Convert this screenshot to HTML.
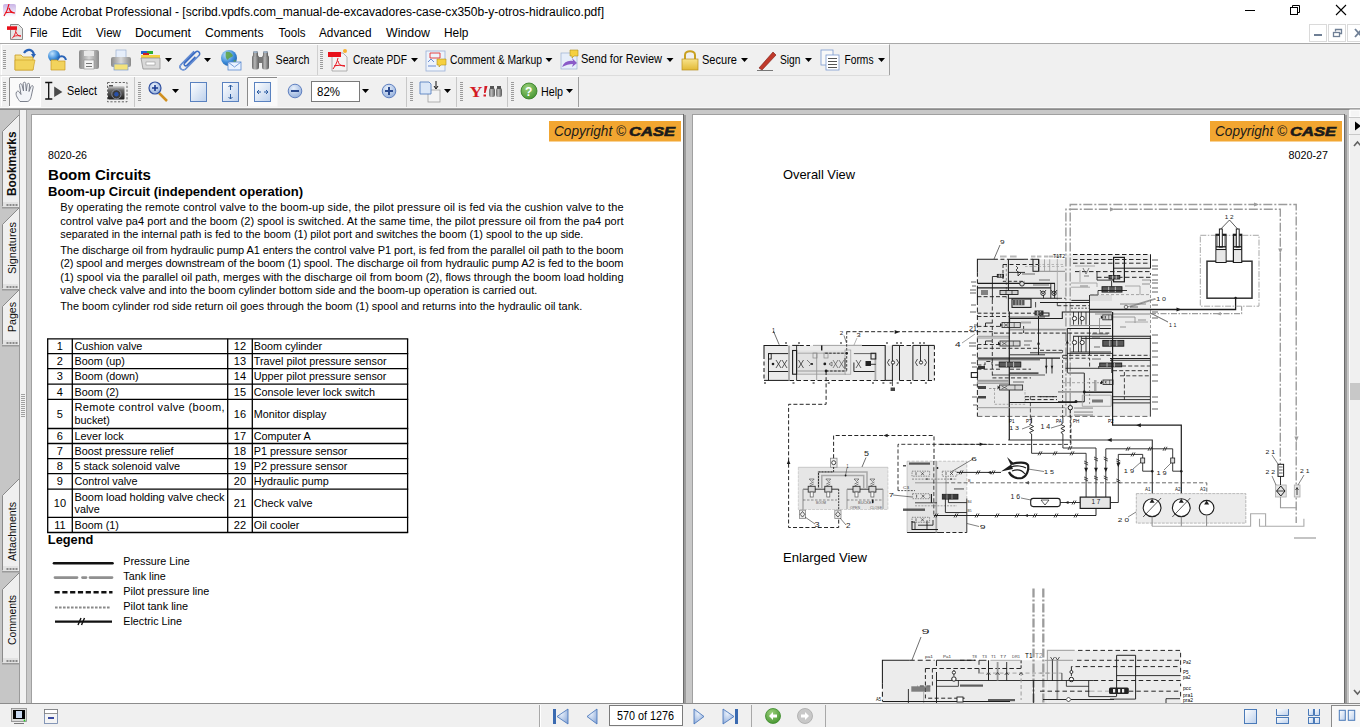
<!DOCTYPE html><html><head><meta charset="utf-8"><style>html,body{margin:0;padding:0;width:1360px;height:727px;overflow:hidden;background:#f0f0f0}svg{display:block;font-family:"Liberation Sans",sans-serif}</style></head><body><svg width="1360" height="727" viewBox="0 0 1360 727"><rect x="0" y="0" width="1360" height="727" fill="#f0f0f0"/><rect x="0" y="0" width="1360" height="43" fill="#ffffff"/><rect x="0" y="43" width="1360" height="1" fill="#a9a9a9"/><defs><linearGradient id="acg" x1="0" y1="0" x2="0" y2="1"><stop offset="0" stop-color="#c9b4e6"/><stop offset="1" stop-color="#ffffff"/></linearGradient><linearGradient id="fold" x1="0" y1="0" x2="0" y2="1"><stop offset="0" stop-color="#f8e38a"/><stop offset="1" stop-color="#e2b934"/></linearGradient><linearGradient id="btnb" x1="0" y1="0" x2="1" y2="1"><stop offset="0" stop-color="#ffffff"/><stop offset="1" stop-color="#bcd0ec"/></linearGradient><linearGradient id="gray" x1="0" y1="0" x2="1" y2="0"><stop offset="0" stop-color="#8a8a8a"/><stop offset="0.5" stop-color="#d8d8d8"/><stop offset="1" stop-color="#8a8a8a"/></linearGradient><radialGradient id="globe" cx="0.35" cy="0.3" r="0.8"><stop offset="0" stop-color="#bfe3ff"/><stop offset="0.6" stop-color="#3a8ad8"/><stop offset="1" stop-color="#1f5aa0"/></radialGradient><radialGradient id="grn" cx="0.4" cy="0.3" r="0.8"><stop offset="0" stop-color="#9ad07a"/><stop offset="1" stop-color="#3f8f2a"/></radialGradient><radialGradient id="bluec" cx="0.4" cy="0.3" r="0.8"><stop offset="0" stop-color="#e8f0fb"/><stop offset="1" stop-color="#8aa8d8"/></radialGradient></defs><rect x="3" y="4" width="13" height="13" fill="url(#acg)" rx="2"/><path d="M9,4 C8,9 6,13 4,16 M9,8 C10,11 12,13 15,13 M5,13 C8,12 11,12 14,13" fill="none" stroke="#e8101a" stroke-width="1.2"/><text x="23" y="16" font-size="12" fill="#000" textLength="581" lengthAdjust="spacingAndGlyphs">Adobe Acrobat Professional - [scribd.vpdfs.com_manual-de-excavadores-case-cx350b-y-otros-hidraulico.pdf]</text><rect x="1245" y="10" width="10" height="1" fill="#000"/><rect x="1290.5" y="7.5" width="7" height="7" fill="none" stroke="#000" stroke-width="1"/><path d="M1292.5,7.5 V5.5 H1299.5 V12.5 H1297.5" fill="none" stroke="#000" stroke-width="1"/><path d="M1336,5 L1346,15 M1346,5 L1336,15" fill="none" stroke="#000" stroke-width="1.1"/><path d="M10.5,24.5 H18.5 L22.5,28.5 V39.5 H10.5 Z" fill="#e6e6e6" stroke="#8a8a8a" stroke-width="1"/><rect x="7" y="26.3" width="10" height="3.6" fill="#e8101a"/><path d="M16,30 C15.5,34 14,36.5 12,38.5 M16,32 C17,35 18.5,36 21,36 M13.5,36.5 C16,35.5 18.5,35.5 21,36" fill="none" stroke="#e8101a" stroke-width="0.9"/><text x="30" y="37" font-size="12" fill="#000" textLength="17.5" lengthAdjust="spacingAndGlyphs">File</text><text x="62" y="37" font-size="12" fill="#000" textLength="19.5" lengthAdjust="spacingAndGlyphs">Edit</text><text x="96" y="37" font-size="12" fill="#000" textLength="25" lengthAdjust="spacingAndGlyphs">View</text><text x="135" y="37" font-size="12" fill="#000" textLength="56" lengthAdjust="spacingAndGlyphs">Document</text><text x="205" y="37" font-size="12" fill="#000" textLength="58.5" lengthAdjust="spacingAndGlyphs">Comments</text><text x="278.5" y="37" font-size="12" fill="#000" textLength="27" lengthAdjust="spacingAndGlyphs">Tools</text><text x="319" y="37" font-size="12" fill="#000" textLength="52.5" lengthAdjust="spacingAndGlyphs">Advanced</text><text x="386" y="37" font-size="12" fill="#000" textLength="44" lengthAdjust="spacingAndGlyphs">Window</text><text x="444" y="37" font-size="12" fill="#000" textLength="24.5" lengthAdjust="spacingAndGlyphs">Help</text><rect x="1309.5" y="24.5" width="17" height="17" fill="#ffffff" stroke="#dadada" stroke-width="1"/><rect x="1328.5" y="24.5" width="17" height="17" fill="#ffffff" stroke="#dadada" stroke-width="1"/><rect x="1347.5" y="24.5" width="17" height="17" fill="#ffffff" stroke="#dadada" stroke-width="1"/><rect x="1314" y="34" width="8" height="2" fill="#6f7f95"/><rect x="1333.5" y="32.5" width="6" height="4" fill="none" stroke="#6f7f95" stroke-width="1.3"/><path d="M1335.5,31.5 V29.5 H1341.5 V33.5 H1339.5" fill="none" stroke="#6f7f95" stroke-width="1.3"/><path d="M1355,29 L1362,37 M1362,29 L1355,37" fill="none" stroke="#6f7f95" stroke-width="1.8"/><rect x="0" y="44" width="1360" height="32" fill="#f0f0f0"/><path d="M1.5,75.5 V44.5 H889.5 V75.5" fill="none" stroke="#ffffff" stroke-width="1"/><path d="M889.5,44.5 V75.5 H0" fill="none" stroke="#a0a0a0" stroke-width="1"/><rect x="0" y="75" width="890" height="1" fill="#dcdcdc"/><rect x="3" y="50" width="3" height="1" fill="#9a9a9a"/><rect x="3" y="52" width="3" height="1" fill="#9a9a9a"/><rect x="3" y="54" width="3" height="1" fill="#9a9a9a"/><rect x="3" y="56" width="3" height="1" fill="#9a9a9a"/><rect x="3" y="58" width="3" height="1" fill="#9a9a9a"/><rect x="3" y="60" width="3" height="1" fill="#9a9a9a"/><rect x="3" y="62" width="3" height="1" fill="#9a9a9a"/><rect x="3" y="64" width="3" height="1" fill="#9a9a9a"/><rect x="3" y="66" width="3" height="1" fill="#9a9a9a"/><rect x="3" y="68" width="3" height="1" fill="#9a9a9a"/><path d="M15,55 H21 L23,57 H33 V70 H15 Z" fill="url(#fold)" stroke="#c89a20" stroke-width="0.8"/><path d="M15,60 H35 L33,70 H15 Z" fill="#f2d35c" stroke="#c89a20" stroke-width="0.6"/><path d="M24,53 C27,48 33,49 34,55" fill="none" stroke="#2a64b8" stroke-width="2.2"/><path d="M31,54 L36,54 L33.5,58 Z" fill="#2a64b8"/><circle cx="54" cy="56" r="6" fill="url(#globe)"/><path d="M51,60 H57 L58,61 H65 V70 H51 Z" fill="#f2d35c" stroke="#c89a20" stroke-width="0.7"/><path d="M58,58 C61,55 65,56 66,60" fill="none" stroke="#2a64b8" stroke-width="2"/><rect x="79" y="50" width="20" height="19" fill="url(#gray)" rx="2"/><rect x="84" y="51" width="10" height="5" fill="#e8e8e8"/><rect x="84" y="60" width="10" height="9" fill="#f4f4f4" stroke="#888" stroke-width="0.6"/><rect x="86" y="63" width="6" height="1" fill="#777"/><rect x="86" y="66" width="6" height="1" fill="#777"/><rect x="116" y="50" width="10" height="8" fill="#e6eefa" stroke="#9ab0d0" stroke-width="0.7"/><rect x="111" y="57" width="20" height="10" fill="url(#gray)" rx="2"/><rect x="114" y="64" width="14" height="6" fill="#f4e27a" stroke="#7a9ad0" stroke-width="0.7"/><rect x="141" y="51" width="6" height="3" fill="#2060d0"/><rect x="147" y="51" width="6" height="3" fill="#30b030"/><rect x="143" y="53" width="6" height="3" fill="#d02020"/><rect x="141" y="55" width="19" height="4" fill="#f6d040"/><path d="M141,58 H160 V69 H143 Z" fill="#d8d8d8" stroke="#888" stroke-width="0.7"/><rect x="146" y="62" width="9" height="3" fill="#ffffff" stroke="#888" stroke-width="0.5"/><path d="M165.0,58 L172.0,58 L168.5,62 Z" fill="#000"/><g transform="translate(190,60) rotate(-45)"><path d="M9,-3.2 H-9.5 A3.2,3.2 0 0 0 -9.5,3.2 H9.5 A2.4,2.4 0 0 0 9.5,-1.6 H-6 A1.6,1.6 0 0 0 -6,1.6 H6" fill="none" stroke="#3f6fc4" stroke-width="1.5"/><path d="M9,-3.2 H-9.5 A3.2,3.2 0 0 0 -9.5,3.2 H9.5" fill="none" stroke="#bcd2f2" stroke-width="0.5"/></g><path d="M204.0,58 L211.0,58 L207.5,62 Z" fill="#000"/><circle cx="229" cy="58" r="8" fill="url(#globe)"/><path d="M226,52 C229,51 232,53 233,56 C231,58 229,57 228,60 C226,59 225,56 226,52 Z M234,60 C236,60 237,62 236,64 L233,63 Z" fill="#5aa040" opacity="0.85"/><rect x="228" y="62" width="13" height="8" fill="#eaf2ff" stroke="#5a8ad0" stroke-width="0.8"/><path d="M228,62 L234.5,67 L241,62" fill="none" stroke="#5a8ad0" stroke-width="0.8"/><defs><linearGradient id="bino" x1="0" y1="0" x2="1" y2="0"><stop offset="0" stop-color="#6a6a6a"/><stop offset="0.4" stop-color="#b8b8b8"/><stop offset="1" stop-color="#5a5a5a"/></linearGradient></defs><rect x="252" y="55" width="7" height="14.5" fill="url(#bino)" rx="2.5"/><rect x="262" y="55" width="7" height="14.5" fill="url(#bino)" rx="2.5"/><rect x="253" y="51" width="5" height="6" fill="url(#bino)" rx="1.5"/><rect x="263" y="51" width="5" height="6" fill="url(#bino)" rx="1.5"/><rect x="253.5" y="51.5" width="4" height="1.2" fill="#9ab8d8"/><rect x="263.5" y="51.5" width="4" height="1.2" fill="#9ab8d8"/><rect x="258.5" y="57" width="4" height="6" fill="#777"/><text x="275.5" y="64" font-size="12" fill="#000" textLength="34" lengthAdjust="spacingAndGlyphs">Search</text><line x1="317.5" y1="45" x2="317.5" y2="75" stroke="#d0d0d0" stroke-width="1"/><rect x="320" y="50" width="3" height="1" fill="#9a9a9a"/><rect x="320" y="52" width="3" height="1" fill="#9a9a9a"/><rect x="320" y="54" width="3" height="1" fill="#9a9a9a"/><rect x="320" y="56" width="3" height="1" fill="#9a9a9a"/><rect x="320" y="58" width="3" height="1" fill="#9a9a9a"/><rect x="320" y="60" width="3" height="1" fill="#9a9a9a"/><rect x="320" y="62" width="3" height="1" fill="#9a9a9a"/><rect x="320" y="64" width="3" height="1" fill="#9a9a9a"/><rect x="320" y="66" width="3" height="1" fill="#9a9a9a"/><rect x="320" y="68" width="3" height="1" fill="#9a9a9a"/><path d="M330,53 H343 L347,57 V71 H332 V53" fill="#f4f4f4" stroke="#a0a0a0" stroke-width="0.8"/><rect x="328" y="52" width="13" height="5" fill="#e8101a"/><path d="M338,58 C337,63 335,66 333,69 M338,61 C339,65 341,66 345,66 M334,66 C338,65 342,65 345,66" fill="none" stroke="#e8101a" stroke-width="1"/><circle cx="345" cy="51" r="2" fill="#f8b030"/><text x="353" y="64" font-size="12" fill="#000" textLength="54" lengthAdjust="spacingAndGlyphs">Create PDF</text><path d="M411.0,58 L418.0,58 L414.5,62 Z" fill="#000"/><rect x="426" y="51" width="19" height="20" fill="#eef3fb" stroke="#9ab0d8" stroke-width="0.8"/><path d="M430,53 h10 v5 h-10 z" fill="none" stroke="#e03030" stroke-width="0.9"/><path d="M437,59 h9 v6 h-5 l-2,2 v-2 h-2 z" fill="#f6d040" stroke="#b09020" stroke-width="0.6"/><path d="M428,62 l3,-3 l3,3 M428,66 h8" fill="none" stroke="#3060c0" stroke-width="0.7"/><text x="450" y="64" font-size="12" fill="#000" textLength="92" lengthAdjust="spacingAndGlyphs">Comment &amp; Markup</text><path d="M545.5,58 L552.5,58 L549,62 Z" fill="#000"/><rect x="561" y="53" width="16" height="16" fill="#e6eefa" stroke="#9ab0d0" stroke-width="0.7"/><path d="M570,50 h8 v6 h-4 l-2,2 v-2 h-2 z" fill="#f6d040" stroke="#b09020" stroke-width="0.6"/><path d="M562,67 C564,62 568,60 573,61 L572,58 L577,63 L572,67 L573,64 C569,64 566,65 562,67" fill="#8a5ac8"/><text x="581" y="63" font-size="12" fill="#000" textLength="81" lengthAdjust="spacingAndGlyphs">Send for Review</text><path d="M666.5,58 L673.5,58 L670,62 Z" fill="#000"/><path d="M685,59 V55 C685,50 695,50 695,55 V59" fill="none" stroke="#c8a020" stroke-width="2"/><rect x="682" y="59" width="16" height="11" fill="url(#fold)" stroke="#b89020" stroke-width="0.7"/><text x="702" y="64" font-size="12" fill="#000" textLength="35" lengthAdjust="spacingAndGlyphs">Secure</text><path d="M741.0,58 L748.0,58 L744.5,62 Z" fill="#000"/><path d="M759,68 L773,52 L776,55 L762,70 Z" fill="#c0392b" stroke="#7a1a10" stroke-width="0.6"/><line x1="757" y1="70.5" x2="773" y2="70.5" stroke="#777" stroke-width="1"/><text x="780" y="64" font-size="12" fill="#000" textLength="20.5" lengthAdjust="spacingAndGlyphs">Sign</text><path d="M805.0,58 L812.0,58 L808.5,62 Z" fill="#000"/><rect x="821" y="50" width="12" height="15" fill="#f8f8f8" stroke="#7a9ad0" stroke-width="0.8"/><rect x="826" y="55" width="13" height="15" fill="#ffffff" stroke="#7a9ad0" stroke-width="0.8"/><rect x="828" y="58" width="9" height="1" fill="#555"/><rect x="828" y="61" width="9" height="1" fill="#555"/><rect x="828" y="64" width="9" height="1" fill="#555"/><rect x="828" y="67" width="9" height="1" fill="#555"/><text x="844.5" y="64" font-size="12" fill="#000" textLength="29" lengthAdjust="spacingAndGlyphs">Forms</text><path d="M878.0,58 L885.0,58 L881.5,62 Z" fill="#000"/><rect x="0" y="76" width="1360" height="31" fill="#f0f0f0"/><path d="M1.5,106.5 V76.5 H578.5 V106.5" fill="none" stroke="#ffffff" stroke-width="1"/><line x1="578.5" y1="77" x2="578.5" y2="107" stroke="#a0a0a0" stroke-width="1"/><rect x="3" y="82" width="3" height="1" fill="#9a9a9a"/><rect x="3" y="84" width="3" height="1" fill="#9a9a9a"/><rect x="3" y="86" width="3" height="1" fill="#9a9a9a"/><rect x="3" y="88" width="3" height="1" fill="#9a9a9a"/><rect x="3" y="90" width="3" height="1" fill="#9a9a9a"/><rect x="3" y="92" width="3" height="1" fill="#9a9a9a"/><rect x="3" y="94" width="3" height="1" fill="#9a9a9a"/><rect x="3" y="96" width="3" height="1" fill="#9a9a9a"/><rect x="3" y="98" width="3" height="1" fill="#9a9a9a"/><rect x="3" y="100" width="3" height="1" fill="#9a9a9a"/><rect x="9.5" y="77.5" width="31" height="29" fill="#fafafa" stroke="#ffffff" stroke-width="1"/><line x1="9.5" y1="78" x2="9.5" y2="106" stroke="#8a8a8a" stroke-width="1"/><line x1="9.5" y1="77.5" x2="40" y2="77.5" stroke="#8a8a8a" stroke-width="1"/><path d="M20,101.5 C18,99 15,95 16.5,92 C17.5,90.5 19,91 20,93 L21,94.5 L19.5,85.5 C19.2,83.5 21.5,83 22,85 L23.5,91 L23.2,83.5 C23.2,81.8 25.6,81.8 25.7,83.5 L26.3,91 L27.2,84.5 C27.5,82.8 29.8,83 29.6,84.8 L29,91.5 L31,86.5 C31.6,85 33.6,85.6 33.2,87.3 L31.5,95 C30.8,99 29.5,101.5 27,101.5 Z" fill="#f2f4f8" stroke="#6f7480" stroke-width="0.9"/><path d="M45.2,82.5 H52.3 M48.7,82.5 V99 M45.2,99 H52.3" fill="none" stroke="#111" stroke-width="1.3"/><path d="M54.2,86.5 L62.4,92 L54.2,97 Z" fill="#4a4a4a"/><text x="67" y="95" font-size="12" fill="#000" textLength="30" lengthAdjust="spacingAndGlyphs">Select</text><rect x="107.5" y="82.5" width="19.5" height="19.3" fill="none" stroke="#555" stroke-width="0.9" stroke-dasharray="2.2,1.6"/><defs><linearGradient id="cam" x1="0" y1="0" x2="0" y2="1"><stop offset="0" stop-color="#d8d8d8"/><stop offset="0.3" stop-color="#6a6a6a"/><stop offset="1" stop-color="#1e1e1e"/></linearGradient></defs><rect x="108" y="86" width="16.5" height="13.4" fill="url(#cam)" rx="1"/><rect x="109" y="85" width="4" height="1.5" fill="#555"/><circle cx="116.4" cy="94.3" r="4.6" fill="#3a3a3a" stroke="#9aa0b0" stroke-width="0.8"/><circle cx="116.4" cy="94.3" r="2.2" fill="#2850a8"/><line x1="134.5" y1="77" x2="134.5" y2="107" stroke="#c8c8c8" stroke-width="1"/><rect x="138" y="82" width="3" height="1" fill="#9a9a9a"/><rect x="138" y="84" width="3" height="1" fill="#9a9a9a"/><rect x="138" y="86" width="3" height="1" fill="#9a9a9a"/><rect x="138" y="88" width="3" height="1" fill="#9a9a9a"/><rect x="138" y="90" width="3" height="1" fill="#9a9a9a"/><rect x="138" y="92" width="3" height="1" fill="#9a9a9a"/><rect x="138" y="94" width="3" height="1" fill="#9a9a9a"/><rect x="138" y="96" width="3" height="1" fill="#9a9a9a"/><rect x="138" y="98" width="3" height="1" fill="#9a9a9a"/><rect x="138" y="100" width="3" height="1" fill="#9a9a9a"/><line x1="159" y1="93" x2="167" y2="101" stroke="#d09020" stroke-width="2.5"/><circle cx="155" cy="88" r="6" fill="url(#bluec)" stroke="#3050a0" stroke-width="1.2"/><path d="M155,85 V91 M152,88 H158" fill="none" stroke="#1a3a90" stroke-width="1.6"/><path d="M172.0,89 L179.0,89 L175.5,93 Z" fill="#000"/><rect x="190.5" y="82.5" width="16" height="19" fill="url(#btnb)" stroke="#5a82c0" stroke-width="1"/><rect x="222.5" y="82.5" width="16" height="19" fill="url(#btnb)" stroke="#5a82c0" stroke-width="1"/><path d="M230.5,85 V90 M228.5,87 L230.5,85 L232.5,87 M230.5,94 V99 M228.5,97 L230.5,99 L232.5,97" fill="none" stroke="#2a5aa0" stroke-width="1"/><rect x="247.5" y="77.5" width="30" height="29" fill="#fafafa"/><line x1="247.5" y1="78" x2="247.5" y2="106" stroke="#8a8a8a" stroke-width="1"/><line x1="247.5" y1="77.5" x2="277" y2="77.5" stroke="#8a8a8a" stroke-width="1"/><rect x="254.5" y="82.5" width="16" height="19" fill="url(#btnb)" stroke="#5a82c0" stroke-width="1"/><path d="M257,92 H261 M259,90 L257,92 L259,94 M264,92 H268 M266,90 L268,92 L266,94" fill="none" stroke="#2a5aa0" stroke-width="1"/><circle cx="295" cy="91" r="6.8" fill="url(#bluec)" stroke="#6080c0" stroke-width="1"/><rect x="291" y="90" width="8" height="2" fill="#2a4a90"/><rect x="311.5" y="81.5" width="48" height="20" fill="#ffffff" stroke="#7a7a7a" stroke-width="1"/><text x="317" y="96" font-size="12" fill="#000" textLength="23" lengthAdjust="spacingAndGlyphs">82%</text><path d="M362.0,89 L369.0,89 L365.5,93 Z" fill="#000"/><circle cx="389" cy="91" r="6.8" fill="url(#bluec)" stroke="#6080c0" stroke-width="1"/><rect x="385" y="90" width="8" height="2" fill="#2a4a90"/><rect x="388" y="87" width="2" height="8" fill="#2a4a90"/><line x1="406.5" y1="77" x2="406.5" y2="107" stroke="#c8c8c8" stroke-width="1"/><rect x="410" y="82" width="3" height="1" fill="#9a9a9a"/><rect x="410" y="84" width="3" height="1" fill="#9a9a9a"/><rect x="410" y="86" width="3" height="1" fill="#9a9a9a"/><rect x="410" y="88" width="3" height="1" fill="#9a9a9a"/><rect x="410" y="90" width="3" height="1" fill="#9a9a9a"/><rect x="410" y="92" width="3" height="1" fill="#9a9a9a"/><rect x="410" y="94" width="3" height="1" fill="#9a9a9a"/><rect x="410" y="96" width="3" height="1" fill="#9a9a9a"/><rect x="410" y="98" width="3" height="1" fill="#9a9a9a"/><rect x="410" y="100" width="3" height="1" fill="#9a9a9a"/><rect x="428" y="90" width="12" height="12" fill="#f4f4f4" stroke="#a0a0a0" stroke-width="0.8"/><path d="M420,82 H429 L431,84 V94 H420 Z" fill="#dbe7f7" stroke="#5a82c0" stroke-width="0.9"/><path d="M436,81 V88 M434,86 L436,89 L438,86" fill="none" stroke="#111" stroke-width="1"/><path d="M444.0,89 L451.0,89 L447.5,93 Z" fill="#000"/><line x1="456.5" y1="77" x2="456.5" y2="107" stroke="#c8c8c8" stroke-width="1"/><rect x="460" y="82" width="3" height="1" fill="#9a9a9a"/><rect x="460" y="84" width="3" height="1" fill="#9a9a9a"/><rect x="460" y="86" width="3" height="1" fill="#9a9a9a"/><rect x="460" y="88" width="3" height="1" fill="#9a9a9a"/><rect x="460" y="90" width="3" height="1" fill="#9a9a9a"/><rect x="460" y="92" width="3" height="1" fill="#9a9a9a"/><rect x="460" y="94" width="3" height="1" fill="#9a9a9a"/><rect x="460" y="96" width="3" height="1" fill="#9a9a9a"/><rect x="460" y="98" width="3" height="1" fill="#9a9a9a"/><rect x="460" y="100" width="3" height="1" fill="#9a9a9a"/><text x="469.5" y="96.5" font-size="14" font-weight="bold" fill="#d41a24" font-family="Liberation Serif, serif" textLength="13" lengthAdjust="spacingAndGlyphs">Y</text><path d="M484.5,86 L487.5,86 L485.5,93 L484,93 Z M483.5,94.5 h2.5 v2 h-2.5 z" fill="#d41a24"/><rect x="489" y="88" width="6" height="9" fill="url(#bino)" rx="2"/><rect x="496" y="88" width="6" height="9" fill="url(#bino)" rx="2"/><rect x="490" y="86" width="4" height="3" fill="#555"/><rect x="497" y="86" width="4" height="3" fill="#555"/><line x1="507.5" y1="77" x2="507.5" y2="107" stroke="#c8c8c8" stroke-width="1"/><rect x="511" y="82" width="3" height="1" fill="#9a9a9a"/><rect x="511" y="84" width="3" height="1" fill="#9a9a9a"/><rect x="511" y="86" width="3" height="1" fill="#9a9a9a"/><rect x="511" y="88" width="3" height="1" fill="#9a9a9a"/><rect x="511" y="90" width="3" height="1" fill="#9a9a9a"/><rect x="511" y="92" width="3" height="1" fill="#9a9a9a"/><rect x="511" y="94" width="3" height="1" fill="#9a9a9a"/><rect x="511" y="96" width="3" height="1" fill="#9a9a9a"/><rect x="511" y="98" width="3" height="1" fill="#9a9a9a"/><rect x="511" y="100" width="3" height="1" fill="#9a9a9a"/><circle cx="529" cy="91" r="8" fill="url(#grn)" stroke="#2f7a20" stroke-width="0.8"/><text x="525" y="96" font-size="12" font-weight="bold" fill="#ffffff">?</text><text x="541" y="96" font-size="12" fill="#000" textLength="22" lengthAdjust="spacingAndGlyphs">Help</text><path d="M566.0,89 L573.0,89 L569.5,93 Z" fill="#000"/><rect x="0" y="107" width="1360" height="1" fill="#f8f8f8"/><rect x="0" y="108" width="1360" height="1" fill="#a4a4a4"/><rect x="0" y="109" width="1360" height="1" fill="#8a8a8a"/><rect x="0" y="110" width="1360" height="593" fill="#c8c8c8"/><rect x="0" y="110" width="19" height="593" fill="#c6c6c6"/><rect x="19" y="110" width="1" height="593" fill="#9a9a9a"/><rect x="20" y="110" width="6" height="593" fill="#f2f2f2"/><rect x="26" y="110" width="1" height="593" fill="#a8a8a8"/><rect x="21" y="394" width="4" height="1" fill="#a0a0a0"/><rect x="21" y="396" width="4" height="1" fill="#a0a0a0"/><rect x="21" y="398" width="4" height="1" fill="#a0a0a0"/><rect x="21" y="400" width="4" height="1" fill="#a0a0a0"/><rect x="21" y="402" width="4" height="1" fill="#a0a0a0"/><rect x="21" y="404" width="4" height="1" fill="#a0a0a0"/><rect x="21" y="406" width="4" height="1" fill="#a0a0a0"/><rect x="21" y="408" width="4" height="1" fill="#a0a0a0"/><rect x="21" y="410" width="4" height="1" fill="#a0a0a0"/><rect x="21" y="412" width="4" height="1" fill="#a0a0a0"/><rect x="21" y="414" width="4" height="1" fill="#a0a0a0"/><rect x="21" y="416" width="4" height="1" fill="#a0a0a0"/><path d="M19,115 L3,131 V207 H19 Z" fill="#efefef"/><path d="M19,115 L2.5,131.5 V206" fill="none" stroke="#8a8a8a" stroke-width="1"/><rect x="3" y="202" width="15" height="5" fill="#e2e2e2"/><rect x="2" y="207" width="17" height="1.5" fill="#9a9a9a"/><rect x="6.5" y="204" width="2" height="2" fill="#8a8a8a"/><rect x="9.5" y="204" width="2" height="2" fill="#8a8a8a"/><rect x="12.5" y="204" width="2" height="2" fill="#8a8a8a"/><rect x="15.5" y="204" width="2" height="2" fill="#8a8a8a"/><g transform="translate(15.5,196) rotate(-90)"><text x="0" y="0" font-size="12" font-weight="bold" fill="#101010" textLength="64.5" lengthAdjust="spacingAndGlyphs">Bookmarks</text></g><path d="M19,208 L3,224 V289 H19 Z" fill="#efefef"/><path d="M19,208 L2.5,224.5 V288" fill="none" stroke="#8a8a8a" stroke-width="1"/><rect x="3" y="284" width="15" height="5" fill="#e2e2e2"/><rect x="2" y="289" width="17" height="1.5" fill="#9a9a9a"/><rect x="6.5" y="286" width="2" height="2" fill="#8a8a8a"/><rect x="9.5" y="286" width="2" height="2" fill="#8a8a8a"/><rect x="12.5" y="286" width="2" height="2" fill="#8a8a8a"/><rect x="15.5" y="286" width="2" height="2" fill="#8a8a8a"/><g transform="translate(15.5,274) rotate(-90)"><text x="0" y="0" font-size="11" fill="#101010" textLength="52" lengthAdjust="spacingAndGlyphs">Signatures</text></g><path d="M19,290 L3,306 V345 H19 Z" fill="#efefef"/><path d="M19,290 L2.5,306.5 V344" fill="none" stroke="#8a8a8a" stroke-width="1"/><rect x="3" y="340" width="15" height="5" fill="#e2e2e2"/><rect x="2" y="345" width="17" height="1.5" fill="#9a9a9a"/><rect x="6.5" y="342" width="2" height="2" fill="#8a8a8a"/><rect x="9.5" y="342" width="2" height="2" fill="#8a8a8a"/><rect x="12.5" y="342" width="2" height="2" fill="#8a8a8a"/><rect x="15.5" y="342" width="2" height="2" fill="#8a8a8a"/><g transform="translate(15.5,332) rotate(-90)"><text x="0" y="0" font-size="11" fill="#101010" textLength="30" lengthAdjust="spacingAndGlyphs">Pages</text></g><path d="M19,479 L3,495 V571 H19 Z" fill="#efefef"/><path d="M19,479 L2.5,495.5 V570" fill="none" stroke="#8a8a8a" stroke-width="1"/><rect x="3" y="566" width="15" height="5" fill="#e2e2e2"/><rect x="2" y="571" width="17" height="1.5" fill="#9a9a9a"/><rect x="6.5" y="568" width="2" height="2" fill="#8a8a8a"/><rect x="9.5" y="568" width="2" height="2" fill="#8a8a8a"/><rect x="12.5" y="568" width="2" height="2" fill="#8a8a8a"/><rect x="15.5" y="568" width="2" height="2" fill="#8a8a8a"/><g transform="translate(15.5,561) rotate(-90)"><text x="0" y="0" font-size="11" fill="#101010" textLength="59" lengthAdjust="spacingAndGlyphs">Attachments</text></g><path d="M19,573 L3,589 V663 H19 Z" fill="#efefef"/><path d="M19,573 L2.5,589.5 V662" fill="none" stroke="#8a8a8a" stroke-width="1"/><rect x="3" y="658" width="15" height="5" fill="#e2e2e2"/><rect x="2" y="663" width="17" height="1.5" fill="#9a9a9a"/><rect x="6.5" y="660" width="2" height="2" fill="#8a8a8a"/><rect x="9.5" y="660" width="2" height="2" fill="#8a8a8a"/><rect x="12.5" y="660" width="2" height="2" fill="#8a8a8a"/><rect x="15.5" y="660" width="2" height="2" fill="#8a8a8a"/><g transform="translate(15.5,645) rotate(-90)"><text x="0" y="0" font-size="11" fill="#101010" textLength="50" lengthAdjust="spacingAndGlyphs">Comments</text></g><rect x="31" y="114" width="653" height="600" fill="#ffffff"/><rect x="31" y="114" width="652" height="1" fill="#a0a0a0"/><rect x="31" y="114" width="1" height="590" fill="#a0a0a0"/><rect x="683" y="114" width="1" height="590" fill="#6a6a6a"/><rect x="684" y="115" width="2" height="589" fill="#9c9c9c"/><rect x="692" y="114" width="653" height="600" fill="#ffffff"/><rect x="692" y="114" width="652" height="1" fill="#a0a0a0"/><rect x="692" y="114" width="1" height="590" fill="#a0a0a0"/><rect x="1344" y="114" width="1" height="590" fill="#6a6a6a"/><rect x="1345" y="115" width="2" height="589" fill="#9c9c9c"/><rect x="1349" y="110" width="11" height="593" fill="#f0f0f0"/><rect x="1349" y="110" width="1" height="593" fill="#ffffff"/><rect x="1350" y="110" width="10" height="7" fill="#f4f4f4" stroke="#ffffff" stroke-width="1"/><rect x="1349" y="117" width="11" height="1" fill="#c8c8c8"/><rect x="1350" y="118" width="10" height="14" fill="#f0f0f0"/><rect x="1349" y="134" width="11" height="1" fill="#c8c8c8"/><path d="M1355,121.5 L1361,126 L1355,130.6 Z" fill="#000"/><path d="M1354,146 L1357.5,142 L1361,146" fill="none" stroke="#606060" stroke-width="1.6"/><rect x="1350" y="383" width="10" height="17" fill="#c8c8c8"/><path d="M1354,690 L1357.5,694 L1361,690" fill="none" stroke="#606060" stroke-width="1.6"/><rect x="0" y="703" width="1360" height="1" fill="#8c8c8c"/><rect x="0" y="704" width="1360" height="23" fill="#f0f0f0"/><rect x="11.5" y="708.5" width="15" height="13" fill="#d8d8d8" stroke="#888" stroke-width="0.8"/><rect x="13" y="710" width="12" height="9" fill="#000"/><rect x="16" y="711" width="6" height="7" fill="#c8d8f0"/><circle cx="24.5" cy="720.5" r="0.9" fill="#20d020"/><rect x="14" y="723" width="10" height="1" fill="#777"/><rect x="44.5" y="709.5" width="13" height="14" fill="#f4f4f4" stroke="#6a80a8" stroke-width="0.8"/><rect x="44.5" y="709.5" width="13" height="4" fill="#ffffff" stroke="#7a7a7a" stroke-width="0.8"/><rect x="48" y="717" width="6" height="2" fill="#3a4aa0"/><line x1="539.5" y1="705" x2="539.5" y2="727" stroke="#a8a8a8" stroke-width="1"/><line x1="540.5" y1="705" x2="540.5" y2="727" stroke="#ffffff" stroke-width="1"/><rect x="553" y="709" width="3" height="15" fill="#3a6ab0"/><path d="M568,709 L557,716.5 L568,724 Z" fill="url(#bluec)" stroke="#4070b8" stroke-width="0.8"/><path d="M597,709 L587,716.5 L597,724 Z" fill="url(#bluec)" stroke="#4070b8" stroke-width="0.8"/><rect x="609.5" y="705.5" width="73" height="20" fill="#ffffff" stroke="#7a7a7a" stroke-width="1"/><text x="617" y="720" font-size="12" fill="#000" textLength="57" lengthAdjust="spacingAndGlyphs">570 of 1276</text><path d="M694,709 L704,716.5 L694,724 Z" fill="url(#bluec)" stroke="#4070b8" stroke-width="0.8"/><path d="M723,709 L734,716.5 L723,724 Z" fill="url(#bluec)" stroke="#4070b8" stroke-width="0.8"/><rect x="735" y="709" width="3" height="15" fill="#3a6ab0"/><line x1="751.5" y1="705" x2="751.5" y2="727" stroke="#a8a8a8" stroke-width="1"/><circle cx="773" cy="716" r="7.5" fill="url(#grn)" stroke="#3a8a2a" stroke-width="0.8"/><path d="M769,716 L773,712 V714.5 H777 V717.5 H773 V720 Z" fill="#ffffff"/><circle cx="805" cy="716" r="7.5" fill="#c8c8c8" stroke="#a8a8a8" stroke-width="0.8"/><path d="M809,716 L805,712 V714.5 H801 V717.5 H805 V720 Z" fill="#ffffff"/><line x1="825.5" y1="705" x2="825.5" y2="727" stroke="#a8a8a8" stroke-width="1"/><rect x="1244.5" y="709.5" width="12" height="14" fill="url(#btnb)" stroke="#4a7ab8" stroke-width="1"/><rect x="1276.5" y="709" width="12" height="6.5" fill="url(#btnb)"/><path d="M1276.5,709 V715.5 H1288.5 V709" fill="none" stroke="#4a7ab8" stroke-width="1"/><rect x="1276.5" y="717.5" width="12" height="6" fill="url(#btnb)" stroke="#4a7ab8" stroke-width="1"/><rect x="1308.5" y="709" width="5" height="6.5" fill="url(#btnb)"/><path d="M1308.5,709 V715.5 H1313.5 V709" fill="none" stroke="#4a7ab8" stroke-width="1"/><rect x="1308.5" y="717.5" width="5" height="6" fill="url(#btnb)" stroke="#4a7ab8" stroke-width="1"/><rect x="1314.5" y="709" width="5" height="6.5" fill="url(#btnb)"/><path d="M1314.5,709 V715.5 H1319.5 V709" fill="none" stroke="#4a7ab8" stroke-width="1"/><rect x="1314.5" y="717.5" width="5" height="6" fill="url(#btnb)" stroke="#4a7ab8" stroke-width="1"/><rect x="1331.5" y="705.5" width="30" height="22" fill="#f8f8f8"/><line x1="1331.5" y1="705" x2="1331.5" y2="727" stroke="#8a8a8a" stroke-width="1"/><line x1="1331.5" y1="705.5" x2="1360" y2="705.5" stroke="#8a8a8a" stroke-width="1"/><rect x="1339.3" y="710.3" width="6" height="10" fill="url(#btnb)" stroke="#4a7ab8" stroke-width="1"/><rect x="1348.3" y="710.3" width="6.4" height="10" fill="url(#btnb)" stroke="#4a7ab8" stroke-width="1"/><rect x="549" y="121" width="132" height="20.5" fill="#f2a631"/><text x="554" y="136" font-size="14" font-style="italic" fill="#1a1a1a" textLength="72" lengthAdjust="spacingAndGlyphs">Copyright ©</text><text x="629" y="136" font-size="13.5" font-weight="bold" font-style="italic" fill="#1a1a1a" textLength="46" lengthAdjust="spacingAndGlyphs" stroke="#1a1a1a" stroke-width="0.6">CASE</text><rect x="1210" y="121" width="132" height="20.5" fill="#f2a631"/><text x="1215" y="136" font-size="14" font-style="italic" fill="#1a1a1a" textLength="72" lengthAdjust="spacingAndGlyphs">Copyright ©</text><text x="1290" y="136" font-size="13.5" font-weight="bold" font-style="italic" fill="#1a1a1a" textLength="46" lengthAdjust="spacingAndGlyphs" stroke="#1a1a1a" stroke-width="0.6">CASE</text><text x="48" y="159" font-size="11" fill="#000" textLength="39" lengthAdjust="spacingAndGlyphs">8020-26</text><text x="48" y="179.7" font-size="15" font-weight="bold" fill="#000" textLength="103" lengthAdjust="spacingAndGlyphs">Boom Circuits</text><text x="48" y="196" font-size="13" font-weight="bold" fill="#000" textLength="255" lengthAdjust="spacingAndGlyphs">Boom-up Circuit (independent operation)</text><text x="60.2" y="211.2" font-size="11" textLength="563.3" lengthAdjust="spacing">By operating the remote control valve to the boom-up side, the pilot pressure oil is fed via the cushion valve to the</text><text x="60.2" y="224.5" font-size="11" textLength="563.3" lengthAdjust="spacing">control valve pa4 port and the boom (2) spool is switched. At the same time, the pilot pressure oil from the pa4 port</text><text x="60.2" y="237.8" font-size="11" fill="#000" textLength="523.2" lengthAdjust="spacingAndGlyphs">separated in the internal path is fed to the boom (1) pilot port and switches the boom (1) spool to the up side.</text><text x="60.2" y="254.0" font-size="11" textLength="563.3" lengthAdjust="spacing">The discharge oil from hydraulic pump A1 enters the control valve P1 port, is fed from the parallel oil path to the boom</text><text x="60.2" y="267.3" font-size="11" textLength="563.3" lengthAdjust="spacing">(2) spool and merges downstream of the boom (1) spool. The discharge oil from hydraulic pump A2 is fed to the boom</text><text x="60.2" y="280.5" font-size="11" textLength="563.3" lengthAdjust="spacing">(1) spool via the parallel oil path, merges with the discharge oil from boom (2), flows through the boom load holding</text><text x="60.2" y="293.7" font-size="11" fill="#000" textLength="477" lengthAdjust="spacingAndGlyphs">valve check valve and into the boom cylinder bottom side and the boom-up operation is carried out.</text><text x="60.2" y="309.7" font-size="11" fill="#000" textLength="522" lengthAdjust="spacingAndGlyphs">The boom cylinder rod side return oil goes through the boom (1) spool and returns into the hydraulic oil tank.</text><line x1="47.1" y1="338.8" x2="408.20000000000005" y2="338.8" stroke="#000" stroke-width="1.3"/><line x1="47.1" y1="353.6" x2="408.20000000000005" y2="353.6" stroke="#000" stroke-width="1.3"/><line x1="47.1" y1="368.6" x2="408.20000000000005" y2="368.6" stroke="#000" stroke-width="1.3"/><line x1="47.1" y1="384.1" x2="408.20000000000005" y2="384.1" stroke="#000" stroke-width="1.3"/><line x1="47.1" y1="399.3" x2="408.20000000000005" y2="399.3" stroke="#000" stroke-width="1.3"/><line x1="47.1" y1="428.5" x2="408.20000000000005" y2="428.5" stroke="#000" stroke-width="1.3"/><line x1="47.1" y1="443.5" x2="408.20000000000005" y2="443.5" stroke="#000" stroke-width="1.3"/><line x1="47.1" y1="458.6" x2="408.20000000000005" y2="458.6" stroke="#000" stroke-width="1.3"/><line x1="47.1" y1="473.7" x2="408.20000000000005" y2="473.7" stroke="#000" stroke-width="1.3"/><line x1="47.1" y1="489.1" x2="408.20000000000005" y2="489.1" stroke="#000" stroke-width="1.3"/><line x1="47.1" y1="517.3" x2="408.20000000000005" y2="517.3" stroke="#000" stroke-width="1.3"/><line x1="47.1" y1="532.5" x2="408.20000000000005" y2="532.5" stroke="#000" stroke-width="1.3"/><line x1="47.7" y1="338.8" x2="47.7" y2="532.5" stroke="#000" stroke-width="1.3"/><line x1="72.3" y1="338.8" x2="72.3" y2="532.5" stroke="#000" stroke-width="1.3"/><line x1="227.7" y1="338.8" x2="227.7" y2="532.5" stroke="#000" stroke-width="1.3"/><line x1="252.3" y1="338.8" x2="252.3" y2="532.5" stroke="#000" stroke-width="1.3"/><line x1="407.6" y1="338.8" x2="407.6" y2="532.5" stroke="#000" stroke-width="1.3"/><text x="59.9" y="350.00000000000006" font-size="11" text-anchor="middle" fill="#000">1</text><text x="239.9" y="350.00000000000006" font-size="11" text-anchor="middle" fill="#000">12</text><text x="74.5" y="350.00000000000006" font-size="10.8" fill="#000">Cushion valve</text><text x="253.8" y="350.00000000000006" font-size="10.8" fill="#000">Boom cylinder</text><text x="59.9" y="364.90000000000003" font-size="11" text-anchor="middle" fill="#000">2</text><text x="239.9" y="364.90000000000003" font-size="11" text-anchor="middle" fill="#000">13</text><text x="74.5" y="364.90000000000003" font-size="10.8" fill="#000">Boom (up)</text><text x="253.8" y="364.90000000000003" font-size="10.8" fill="#000">Travel pilot pressure sensor</text><text x="59.9" y="380.15000000000003" font-size="11" text-anchor="middle" fill="#000">3</text><text x="239.9" y="380.15000000000003" font-size="11" text-anchor="middle" fill="#000">14</text><text x="74.5" y="380.15000000000003" font-size="10.8" fill="#000">Boom (down)</text><text x="253.8" y="380.15000000000003" font-size="10.8" fill="#000">Upper pilot pressure sensor</text><text x="59.9" y="395.50000000000006" font-size="11" text-anchor="middle" fill="#000">4</text><text x="239.9" y="395.50000000000006" font-size="11" text-anchor="middle" fill="#000">15</text><text x="74.5" y="395.50000000000006" font-size="10.8" fill="#000">Boom (2)</text><text x="253.8" y="395.50000000000006" font-size="10.8" fill="#000">Console lever lock switch</text><text x="59.9" y="417.7" font-size="11" text-anchor="middle" fill="#000">5</text><text x="239.9" y="417.7" font-size="11" text-anchor="middle" fill="#000">16</text><text x="74.5" y="410.8" font-size="11" textLength="150" lengthAdjust="spacing">Remote control valve (boom,</text><text x="74.5" y="423.5" font-size="10.8" fill="#000">bucket)</text><text x="253.8" y="417.7" font-size="10.8" fill="#000">Monitor display</text><text x="59.9" y="439.8" font-size="11" text-anchor="middle" fill="#000">6</text><text x="239.9" y="439.8" font-size="11" text-anchor="middle" fill="#000">17</text><text x="74.5" y="439.8" font-size="10.8" fill="#000">Lever lock</text><text x="253.8" y="439.8" font-size="10.8" fill="#000">Computer A</text><text x="59.9" y="454.85" font-size="11" text-anchor="middle" fill="#000">7</text><text x="239.9" y="454.85" font-size="11" text-anchor="middle" fill="#000">18</text><text x="74.5" y="454.85" font-size="10.8" fill="#000">Boost pressure relief</text><text x="253.8" y="454.85" font-size="10.8" fill="#000">P1 pressure sensor</text><text x="59.9" y="469.95" font-size="11" text-anchor="middle" fill="#000">8</text><text x="239.9" y="469.95" font-size="11" text-anchor="middle" fill="#000">19</text><text x="74.5" y="469.95" font-size="10.8" fill="#000">5 stack solenoid valve</text><text x="253.8" y="469.95" font-size="10.8" fill="#000">P2 pressure sensor</text><text x="59.9" y="485.2" font-size="11" text-anchor="middle" fill="#000">9</text><text x="239.9" y="485.2" font-size="11" text-anchor="middle" fill="#000">20</text><text x="74.5" y="485.2" font-size="10.8" fill="#000">Control valve</text><text x="253.8" y="485.2" font-size="10.8" fill="#000">Hydraulic pump</text><text x="59.9" y="507.0" font-size="11" text-anchor="middle" fill="#000">10</text><text x="239.9" y="507.0" font-size="11" text-anchor="middle" fill="#000">21</text><text x="74.5" y="500.6" font-size="11" textLength="150" lengthAdjust="spacing">Boom load holding valve check</text><text x="74.5" y="513.3000000000001" font-size="10.8" fill="#000">valve</text><text x="253.8" y="507.0" font-size="10.8" fill="#000">Check valve</text><text x="59.9" y="528.6999999999999" font-size="11" text-anchor="middle" fill="#000">11</text><text x="239.9" y="528.6999999999999" font-size="11" text-anchor="middle" fill="#000">22</text><text x="74.5" y="528.6999999999999" font-size="10.8" fill="#000">Boom (1)</text><text x="253.8" y="528.6999999999999" font-size="10.8" fill="#000">Oil cooler</text><text x="47.8" y="544" font-size="13" font-weight="bold" fill="#000" textLength="45.6" lengthAdjust="spacingAndGlyphs">Legend</text><line x1="54" y1="563.3" x2="112.5" y2="563.3" stroke="#111" stroke-width="2.6" stroke-linecap="round"/><path d="M55,577.6 H77 M82.5,577.6 H86 M90,577.6 H112" fill="none" stroke="#909090" stroke-width="2.8" stroke-linecap="round"/><line x1="54.5" y1="592.2" x2="112.5" y2="592.2" stroke="#111" stroke-width="2.6" stroke-dasharray="5.2,2.6"/><line x1="55" y1="607.5" x2="110.5" y2="607.5" stroke="#8a8a8a" stroke-width="2" stroke-dasharray="2.6,1.4"/><line x1="55" y1="621.6" x2="112" y2="621.6" stroke="#111" stroke-width="2.2"/><path d="M78,625 L81,618 M81.5,625 L84.5,618" fill="none" stroke="#111" stroke-width="1.4"/><text x="123.3" y="564.6" font-size="11" fill="#000" textLength="66.4" lengthAdjust="spacingAndGlyphs">Pressure Line</text><text x="123.3" y="579.7" font-size="11" fill="#000" textLength="42.5" lengthAdjust="spacingAndGlyphs">Tank line</text><text x="123.3" y="594.6" font-size="11" fill="#000" textLength="86" lengthAdjust="spacingAndGlyphs">Pilot pressure line</text><text x="123.3" y="609.5" font-size="11" fill="#000" textLength="64.8" lengthAdjust="spacingAndGlyphs">Pilot tank line</text><text x="123.3" y="625.3" font-size="11" fill="#000" textLength="58.6" lengthAdjust="spacingAndGlyphs">Electric Line</text><text x="1288.5" y="158.8" font-size="11" fill="#000" textLength="39.4" lengthAdjust="spacingAndGlyphs">8020-27</text><text x="783" y="178.7" font-size="13" fill="#000" textLength="72" lengthAdjust="spacingAndGlyphs">Overall View</text><text x="783" y="561.5" font-size="13" fill="#000" textLength="84" lengthAdjust="spacingAndGlyphs">Enlarged View</text><rect x="764" y="345.4" width="170.4" height="35" fill="#ebebeb"/><rect x="797" y="350.5" width="49" height="24" fill="#e2e2e2"/><path d="M764,355 L764,345.4 L787.7,345.4" fill="none" stroke="#1c1c1c" stroke-width="1.04" stroke-linejoin="miter"/><path d="M764,355 L764,380.4" fill="none" stroke="#1c1c1c" stroke-width="1.04" stroke-dasharray="4,2.5"/><path d="M764,380.4 L789.5,380.4" fill="none" stroke="#1c1c1c" stroke-width="1.04" stroke-linejoin="miter"/><path d="M789.5,380.4 L885.2,380.4" fill="none" stroke="#1c1c1c" stroke-width="1.04" stroke-dasharray="4.5,2.5"/><path d="M885.2,380.4 L893,380.4" fill="none" stroke="#1c1c1c" stroke-width="1.04" stroke-linejoin="miter"/><path d="M899.5,380.4 L934.4,380.4" fill="none" stroke="#1c1c1c" stroke-width="1.04" stroke-dasharray="4.5,2.5"/><path d="M792.2,345.4 L799.3,345.4" fill="none" stroke="#1c1c1c" stroke-width="1.04" stroke-linejoin="miter"/><path d="M799.3,345.4 L810,345.4" fill="none" stroke="#1c1c1c" stroke-width="1.04" stroke-dasharray="4.5,2.5"/><path d="M813,345.4 L862,345.4" fill="none" stroke="#999" stroke-width="0.9"/><path d="M821.7,345.4 L821.7,350.5" fill="none" stroke="#1c1c1c" stroke-width="1.44" stroke-linejoin="miter"/><path d="M862,345.4 L885.2,345.4 L885.2,380.4" fill="none" stroke="#1c1c1c" stroke-width="1.04" stroke-linejoin="miter"/><path d="M892.4,345.4 L899.5,345.4" fill="none" stroke="#1c1c1c" stroke-width="1.04" stroke-linejoin="miter"/><path d="M899.5,345.4 L912.9,345.4" fill="none" stroke="#1c1c1c" stroke-width="1.04" stroke-dasharray="4.5,2.5"/><path d="M912.9,345.4 L934.4,345.4" fill="none" stroke="#1c1c1c" stroke-width="1.04" stroke-linejoin="miter"/><path d="M934.4,345.4 L934.4,380.4" fill="none" stroke="#1c1c1c" stroke-width="1.04" stroke-dasharray="4,2.5"/><path d="M892.4,345.4 L892.4,380.4" fill="none" stroke="#1c1c1c" stroke-width="0.96" stroke-linejoin="miter"/><path d="M899.5,345.4 L899.5,380.4" fill="none" stroke="#1c1c1c" stroke-width="0.96" stroke-linejoin="miter"/><path d="M912.9,345.4 L912.9,380.4" fill="none" stroke="#1c1c1c" stroke-width="0.96" stroke-linejoin="miter"/><path d="M928.6,345.4 L928.6,380.4" fill="none" stroke="#1c1c1c" stroke-width="0.96" stroke-linejoin="miter"/><path d="M892.4,380 L892.4,386" fill="none" stroke="#1c1c1c" stroke-width="0.8" stroke-linejoin="miter"/><path d="M920.5,345.4 L920.5,361" fill="none" stroke="#1c1c1c" stroke-width="0.88" stroke-linejoin="miter"/><circle cx="893" cy="362.5" r="1.6" fill="#fff" stroke="#1c1c1c" stroke-width="0.9"/><path d="M889.5,359 L887.5,362.5 L889.5,366 M896.5,359 L898.5,362.5 L896.5,366" fill="none" stroke="#1c1c1c" stroke-width="0.8"/><circle cx="921" cy="362.5" r="1.6" fill="#fff" stroke="#1c1c1c" stroke-width="0.9"/><path d="M917.5,359 L915.5,362.5 L917.5,366 M924.5,359 L926.5,362.5 L924.5,366" fill="none" stroke="#1c1c1c" stroke-width="0.8"/><rect x="890.6" y="387.5" width="4.4" height="3.5" fill="#444"/><path d="M768.5,353.6 L768.5,380.4" fill="none" stroke="#1c1c1c" stroke-width="0.96" stroke-linejoin="miter"/><path d="M768.5,353.6 L789.5,353.6" fill="none" stroke="#1c1c1c" stroke-width="0.96" stroke-linejoin="miter"/><path d="M768.5,371.5 L789.5,371.5" fill="none" stroke="#1c1c1c" stroke-width="0.96" stroke-linejoin="miter"/><rect x="768.5" y="353.6" width="2.7" height="5.4" fill="none" stroke="#1c1c1c" stroke-width="0.9"/><path d="M789,345.4 V380.4" fill="none" stroke="#aaa" stroke-width="1.8"/><circle cx="773" cy="364" r="1.3" fill="#1c1c1c"/><path d="M776,360 l5,8 M781,360 l-5,8 M782,360 l5,8 M787,360 l-5,8" fill="none" stroke="#333" stroke-width="0.8"/><rect x="792.6" y="350.5" width="4" height="23.7" fill="none" stroke="#1c1c1c" stroke-width="1.1"/><path d="M796.6,345.4 L796.6,380.4" fill="none" stroke="#1c1c1c" stroke-width="0.88" stroke-linejoin="miter"/><path d="M797,353.2 L846,353.2" fill="none" stroke="#999" stroke-width="0.8"/><path d="M797,371 L846,371" fill="none" stroke="#999" stroke-width="1.2"/><path d="M797,374.2 L846,374.2" fill="none" stroke="#999" stroke-width="0.8"/><path d="M798.5,360 l5,8 M803.5,360 l-5,8" fill="none" stroke="#333" stroke-width="0.8"/><path d="M807,360 l4,4 M809,366 l3,-3" fill="none" stroke="#666" stroke-width="0.8"/><circle cx="812" cy="364" r="1.1" fill="#1c1c1c"/><path d="M816.7,353 L816.7,380" fill="none" stroke="#999" stroke-width="0.9"/><rect x="813" y="353" width="4" height="5" fill="none" stroke="#888" stroke-width="0.7"/><rect x="824" y="353" width="4" height="5" fill="none" stroke="#888" stroke-width="0.7"/><path d="M825.2,353.2 L846.7,353.2" fill="none" stroke="#1c1c1c" stroke-width="0.88" stroke-dasharray="2.5,1.5"/><path d="M826.1,371 L846.7,371" fill="none" stroke="#1c1c1c" stroke-width="0.88" stroke-dasharray="2.5,1.5"/><path d="M846.7,332.1 L846.7,371" fill="none" stroke="#1c1c1c" stroke-width="0.88" stroke-dasharray="2.5,1.5"/><circle cx="846.7" cy="353.2" r="1.3" fill="#1c1c1c"/><circle cx="824.8" cy="363.9" r="1.4" fill="#1c1c1c"/><circle cx="826.1" cy="371" r="1.4" fill="#1c1c1c"/><path d="M829,364 l3,-2 v4 z M833,360 l5,8 M838,360 l-5,8 M839,360 l5,8 M844,360 l-5,8" fill="none" stroke="#555" stroke-width="0.7"/><path d="M845,358 L845,369" fill="none" stroke="#1c1c1c" stroke-width="1.04" stroke-linejoin="miter"/><rect x="845" y="350" width="5.8" height="24.2" fill="none" stroke="#999" stroke-width="0.7"/><path d="M853.9,353.6 L875.8,353.6" fill="none" stroke="#555" stroke-width="0.9"/><path d="M853.9,362.5 L853.9,371.5 L875.8,371.5" fill="none" stroke="#1c1c1c" stroke-width="0.96" stroke-linejoin="miter"/><path d="M875.4,353.6 V380.4" fill="none" stroke="#aaa" stroke-width="1.8"/><rect x="871" y="353.2" width="4.8" height="5.8" fill="none" stroke="#1c1c1c" stroke-width="1"/><path d="M856,360 l5,8 M861,360 l-5,8" fill="none" stroke="#444" stroke-width="0.8"/><rect x="865.5" y="361" width="5.5" height="5" fill="#222"/><path d="M867,364.3 L875.8,364.3" fill="none" stroke="#1c1c1c" stroke-width="0.88" stroke-linejoin="miter"/><path d="M847,345.4 L862,345.4" fill="none" stroke="#aaa" stroke-width="0.8"/><path d="M826.1,371 L826.1,404.3 L788.6,404.3 L788.6,527.5 L838.7,527.5 L838.7,518.4" fill="none" stroke="#1c1c1c" stroke-width="0.96" stroke-dasharray="4,2.2"/><path d="M786.8000000000001,464 L788.6,459.8 L790.4,464 Z" fill="#1c1c1c"/><path d="M894.7,330.12 L899.32,332.1 L894.7,334.08000000000004 Z" fill="#1c1c1c"/><path d="M773.4,331 L779.2,344.7" fill="none" stroke="#1c1c1c" stroke-width="0.64" stroke-linejoin="miter"/><path d="M844,335.5 L846.5,343" fill="none" stroke="#1c1c1c" stroke-width="0.56" stroke-linejoin="miter"/><path d="M857,338 L854,345" fill="none" stroke="#666" stroke-width="0.48" stroke-linejoin="miter"/><rect x="785" y="342" width="2" height="2" fill="#333" opacity="0.6"/><rect x="798" y="342" width="2" height="2" fill="#333" opacity="0.6"/><rect x="840" y="342" width="2" height="2" fill="#333" opacity="0.6"/><rect x="764" y="382" width="2" height="2" fill="#333" opacity="0.6"/><rect x="792.5" y="382" width="2" height="2" fill="#333" opacity="0.6"/><rect x="812.6" y="382" width="2" height="2" fill="#333" opacity="0.6"/><rect x="827.8" y="382" width="2" height="2" fill="#333" opacity="0.6"/><rect x="872" y="382" width="2" height="2" fill="#333" opacity="0.6"/><rect x="882.4" y="382" width="2" height="2" fill="#333" opacity="0.6"/><rect x="889.6" y="382" width="2" height="2" fill="#333" opacity="0.6"/><rect x="896.7" y="382" width="2" height="2" fill="#333" opacity="0.6"/><rect x="910" y="382" width="2" height="2" fill="#333" opacity="0.6"/><rect x="924.9" y="382" width="2" height="2" fill="#333" opacity="0.6"/><rect x="886" y="342" width="2" height="2" fill="#333" opacity="0.6"/><rect x="896" y="342" width="2" height="2" fill="#333" opacity="0.6"/><rect x="900" y="342" width="2" height="2" fill="#333" opacity="0.6"/><rect x="912" y="342" width="2" height="2" fill="#333" opacity="0.6"/><rect x="919" y="342" width="2" height="2" fill="#333" opacity="0.6"/><rect x="923" y="342" width="2" height="2" fill="#333" opacity="0.6"/><rect x="977.4" y="259.3" width="88" height="157.1" fill="#e9e9e9"/><rect x="1065" y="254.5" width="85.5" height="161.9" fill="#ececec"/><path d="M1070.2,416.4 L1070.2,204.5 L1296.2,204.5 L1296.2,523" fill="none" stroke="#9c9c9c" stroke-width="1.4" stroke-dasharray="9,2,2,2"/><path d="M1065.9,416.4 L1065.9,209.3 L1280.3,209.3 L1280.3,464" fill="none" stroke="#9c9c9c" stroke-width="1.4" stroke-dasharray="9,2,2,2"/><path d="M1254.0,202.4 L1258.9,204.5 L1254.0,206.6 Z" fill="#9c9c9c"/><path d="M1110.0,207.20000000000002 L1114.9,209.3 L1110.0,211.4 Z" fill="#9c9c9c"/><path d="M1278.2,248.5 L1280.3,253.4 L1282.3999999999999,248.5 Z" fill="#9c9c9c"/><path d="M1294.4,436.5 L1296.5,441.4 L1298.6,436.5 Z" fill="#9c9c9c"/><path d="M977.4,272.7 L977.4,259.3 L993.9,259.3" fill="none" stroke="#1c1c1c" stroke-width="1.04" stroke-linejoin="miter"/><path d="M993.9,259.3 L1008.4,259.3" fill="none" stroke="#1c1c1c" stroke-width="1.04" stroke-dasharray="4,2.5"/><path d="M1008.4,259.3 L1024,259.3" fill="none" stroke="#1c1c1c" stroke-width="1.04" stroke-linejoin="miter"/><path d="M1024,259.3 L1033,259.3" fill="none" stroke="#1c1c1c" stroke-width="1.04" stroke-dasharray="4,2.5"/><path d="M977.4,272.7 L977.4,285.8" fill="none" stroke="#1c1c1c" stroke-width="1.04" stroke-dasharray="4,2.5"/><path d="M977.4,285.8 L977.4,300" fill="none" stroke="#1c1c1c" stroke-width="1.04" stroke-linejoin="miter"/><path d="M977.4,300 L977.4,416.4" fill="none" stroke="#1c1c1c" stroke-width="0.96" stroke-dasharray="5,2.5"/><path d="M977.4,416.4 L1150.5,416.4" fill="none" stroke="#555" stroke-width="0.88" stroke-dasharray="5,2.5"/><path d="M1073,254.5 L1150.5,254.5" fill="none" stroke="#1c1c1c" stroke-width="1.04" stroke-dasharray="4.5,2.5"/><path d="M1150.5,254.5 L1150.5,268.2" fill="none" stroke="#1c1c1c" stroke-width="1.04" stroke-linejoin="miter"/><path d="M1150.5,280 L1150.5,336" fill="none" stroke="#777" stroke-width="0.72" stroke-dasharray="3,2"/><path d="M1150.4,336 L1150.4,416.4" fill="none" stroke="#1c1c1c" stroke-width="0.88" stroke-linejoin="miter"/><path d="M1000,245 L993.9,259.3" fill="none" stroke="#1c1c1c" stroke-width="0.64" stroke-linejoin="miter"/><path d="M1003,264.5 L1038.7,264.5" fill="none" stroke="#1c1c1c" stroke-width="0.96" stroke-dasharray="4,2.5"/><path d="M1003,264.5 L1003,281.3 L1025,281.3" fill="none" stroke="#1c1c1c" stroke-width="0.88" stroke-dasharray="3.5,2"/><path d="M1006.3,264.5 L1006.3,300" fill="none" stroke="#555" stroke-width="0.64" stroke-dasharray="2.5,2"/><path d="M1008.4,259.3 L1008.4,311.5" fill="none" stroke="#1c1c1c" stroke-width="1.04" stroke-linejoin="miter"/><path d="M1008.4,272.4 L1025,272.4" fill="none" stroke="#1c1c1c" stroke-width="0.88" stroke-linejoin="miter"/><rect x="1033" y="259.3" width="5.7" height="12" fill="none" stroke="#1c1c1c" stroke-width="1"/><path d="M1038.7,259.3 L1038.7,271.4" fill="none" stroke="#1c1c1c" stroke-width="0.96" stroke-linejoin="miter"/><path d="M1038.7,271.3 L1065,271.3" fill="none" stroke="#8a8a8a" stroke-width="1"/><path d="M1044.5,259.3 L1044.5,271.3" fill="none" stroke="#999" stroke-width="0.8"/><path d="M1049.7,259.3 L1049.7,271.3" fill="none" stroke="#999" stroke-width="0.8"/><path d="M1038,264.5 L1065,264.5" fill="none" stroke="#999" stroke-width="0.64" stroke-dasharray="2.5,2"/><path d="M1025,266.5 L1065,266.5" fill="none" stroke="#999" stroke-width="0.64" stroke-dasharray="2.5,2"/><path d="M1057.3,259 L1057.3,300" fill="none" stroke="#aaa" stroke-width="0.9"/><path d="M1016,266 l2,2 l-2,2 l2,2 M1018,272 L1021,273 L1018,276 Z" fill="none" stroke="#1c1c1c" stroke-width="0.8"/><rect x="1022" y="273.0" width="13" height="2.0" fill="#444" opacity="0.38"/><rect x="997.3" y="274.4" width="6.2" height="2.8" fill="#5a5a5a" stroke="#1c1c1c" stroke-width="0.9"/><line x1="999.3666666666667" y1="274.4" x2="999.3666666666667" y2="277.2" stroke="#eee" stroke-width="0.7"/><line x1="1001.4333333333333" y1="274.4" x2="1001.4333333333333" y2="277.2" stroke="#eee" stroke-width="0.7"/><path d="M992.4,276.5 L997.3,276.5" fill="none" stroke="#1c1c1c" stroke-width="0.88" stroke-linejoin="miter"/><path d="M992.4,276.5 L992.4,300" fill="none" stroke="#1c1c1c" stroke-width="0.88" stroke-linejoin="miter"/><path d="M977.4,283.4 L1055,283.4" fill="none" stroke="#1c1c1c" stroke-width="1.12" stroke-linejoin="miter"/><circle cx="1022" cy="283.8" r="2.3" fill="#ddd" stroke="#1c1c1c" stroke-width="0.9"/><path d="M977.4,287.9 L1050.8,287.9" fill="none" stroke="#1c1c1c" stroke-width="1.12" stroke-linejoin="miter"/><path d="M1050.8,283.4 L1050.8,298.3" fill="none" stroke="#1c1c1c" stroke-width="0.88" stroke-linejoin="miter"/><path d="M1054.6,283.4 L1054.6,298.3" fill="none" stroke="#1c1c1c" stroke-width="0.88" stroke-linejoin="miter"/><rect x="1039" y="279.0" width="11" height="2.0" fill="#444" opacity="0.38"/><rect x="1033" y="284.0" width="16" height="2.0" fill="#444" opacity="0.38"/><circle cx="1043" cy="293.3" r="2.2" fill="none" stroke="#1c1c1c" stroke-width="0.9"/><path d="M1040,290 L1043,294 L1046,290" fill="none" stroke="#1c1c1c" stroke-width="0.8"/><circle cx="1054" cy="293.3" r="2.2" fill="none" stroke="#1c1c1c" stroke-width="0.9"/><path d="M1051,290 L1054,294 L1057,290" fill="none" stroke="#1c1c1c" stroke-width="0.8"/><rect x="1000" y="290.5" width="18" height="4" fill="#cfcfcf" stroke="#1c1c1c" stroke-width="0.9"/><line x1="1006.0" y1="290.5" x2="1006.0" y2="294.5" stroke="#1c1c1c" stroke-width="0.7"/><line x1="1012.0" y1="290.5" x2="1012.0" y2="294.5" stroke="#1c1c1c" stroke-width="0.7"/><rect x="981" y="290" width="7" height="5" fill="#555" opacity="0.7"/><path d="M1008.4,298.3 L1058,298.3" fill="none" stroke="#1c1c1c" stroke-width="1.04" stroke-linejoin="miter"/><path d="M1058,298.3 L1065.6,298.3" fill="none" stroke="#1c1c1c" stroke-width="0.88" stroke-dasharray="4,2.2"/><rect x="971" y="281.0" width="5" height="2.0" fill="#333" opacity="0.38"/><rect x="972" y="285.0" width="4" height="2.0" fill="#333" opacity="0.38"/><rect x="970" y="289.0" width="6" height="2.0" fill="#333" opacity="0.38"/><rect x="970" y="292.0" width="6" height="2.0" fill="#333" opacity="0.38"/><rect x="971" y="304.0" width="5" height="2.0" fill="#333" opacity="0.38"/><rect x="970" y="311.0" width="6" height="2.0" fill="#333" opacity="0.38"/><rect x="974" y="324.0" width="3" height="2.0" fill="#333" opacity="0.38"/><rect x="969" y="342.0" width="7" height="2.0" fill="#333" opacity="0.38"/><rect x="969" y="345.0" width="7" height="2.0" fill="#333" opacity="0.38"/><path d="M977.4,296.7 L1009,296.7" fill="none" stroke="#1c1c1c" stroke-width="0.96" stroke-dasharray="4,2.2"/><path d="M992.3,300 L992.3,378" fill="none" stroke="#1c1c1c" stroke-width="0.88" stroke-dasharray="4,2.5"/><rect x="1012" y="299" width="19" height="8.4" fill="none" stroke="#1c1c1c" stroke-width="1.1"/><rect x="1013" y="300" width="11.5" height="5.3" fill="#555"/><line x1="1015.9" y1="300" x2="1015.9" y2="305.3" stroke="#ddd" stroke-width="0.6"/><line x1="1018.8" y1="300" x2="1018.8" y2="305.3" stroke="#ddd" stroke-width="0.6"/><line x1="1021.7" y1="300" x2="1021.7" y2="305.3" stroke="#ddd" stroke-width="0.6"/><path d="M1035.6,302 L1035.6,307.4" fill="none" stroke="#1c1c1c" stroke-width="0.8" stroke-linejoin="miter"/><path d="M977.4,313.2 L1035,313.2" fill="none" stroke="#1c1c1c" stroke-width="0.96" stroke-dasharray="4,2.2"/><rect x="1035" y="311" width="8" height="4" fill="#5a5a5a" stroke="#1c1c1c" stroke-width="0.9"/><line x1="1037.6666666666667" y1="311" x2="1037.6666666666667" y2="315" stroke="#eee" stroke-width="0.7"/><line x1="1040.3333333333333" y1="311" x2="1040.3333333333333" y2="315" stroke="#eee" stroke-width="0.7"/><path d="M977.4,316.5 L1009,316.5" fill="none" stroke="#1c1c1c" stroke-width="0.88" stroke-dasharray="4,2.2"/><path d="M1009,317.3 H1045" fill="none" stroke="#999" stroke-width="2"/><path d="M1009.6,318.5 L1062.3,318.5 L1062.3,311.9 L1111.8,311.9" fill="none" stroke="#1c1c1c" stroke-width="1.04" stroke-linejoin="miter"/><path d="M1009.6,318.5 L1009.6,331.3" fill="none" stroke="#1c1c1c" stroke-width="0.88" stroke-linejoin="miter"/><rect x="1002" y="322.5" width="18.3" height="5" fill="#d6d6d6" stroke="#333" stroke-width="0.9"/><path d="M1004,323.5 L1008.1,326.5 M1008.1,323.5 L1004,326.5" fill="none" stroke="#333" stroke-width="0.6"/><line x1="1014.2" y1="322.5" x2="1014.2" y2="327.5" stroke="#333" stroke-width="0.6"/><path d="M1002,325.0 l-2,-2 v4 z" fill="#1c1c1c"/><path d="M985.5,327 L985.5,323 L992,323" fill="none" stroke="#1c1c1c" stroke-width="0.88" stroke-linejoin="miter"/><path d="M977.4,326.4 L1002,326.4" fill="none" stroke="#1c1c1c" stroke-width="0.88" stroke-dasharray="4,2.2"/><rect x="1021" y="321.5" width="10" height="2.0" fill="#444" opacity="0.38"/><path d="M1023.6,326 L1023.6,333" fill="none" stroke="#1c1c1c" stroke-width="0.88" stroke-linejoin="miter"/><path d="M1009,329.7 H1065" fill="none" stroke="#9a9a9a" stroke-width="1.8"/><path d="M846.3,331.7 L994,331.7 L994,333.1 L1111,333.1" fill="none" stroke="#1c1c1c" stroke-width="0.96" stroke-dasharray="4,2.2"/><path d="M975,334 L962,343" fill="none" stroke="#555" stroke-width="0.56" stroke-linejoin="miter"/><path d="M977,336.3 L1010,336.3" fill="none" stroke="#999" stroke-width="1"/><path d="M977,338 L1010,338" fill="none" stroke="#999" stroke-width="1"/><rect x="1000" y="341" width="20" height="5" fill="#d6d6d6" stroke="#333" stroke-width="0.9"/><path d="M1002,342 L1006.6666666666666,345 M1006.6666666666666,342 L1002,345" fill="none" stroke="#333" stroke-width="0.6"/><line x1="1013.3333333333334" y1="341" x2="1013.3333333333334" y2="346" stroke="#333" stroke-width="0.6"/><path d="M1000,343.5 l-2,-2 v4 z" fill="#1c1c1c"/><path d="M985.5,345 L985.5,341 L992,341" fill="none" stroke="#1c1c1c" stroke-width="0.88" stroke-linejoin="miter"/><path d="M977.4,344.5 L1000,344.5" fill="none" stroke="#1c1c1c" stroke-width="0.88" stroke-dasharray="4,2.2"/><path d="M977.4,348.3 L1040,348.3" fill="none" stroke="#1c1c1c" stroke-width="0.88" stroke-dasharray="4,2.2"/><path d="M1038.5,316 L1038.5,355" fill="none" stroke="#1c1c1c" stroke-width="0.96" stroke-linejoin="miter"/><path d="M1037.0,344.5 L1038.5,341.0 L1040.0,344.5 Z" fill="#1c1c1c"/><path d="M1030,352.8 L1062,352.8" fill="none" stroke="#1c1c1c" stroke-width="0.88" stroke-linejoin="miter"/><rect x="1024" y="340.0" width="8" height="2.0" fill="#444" opacity="0.38"/><rect x="1024" y="344.0" width="6" height="2.0" fill="#444" opacity="0.38"/><path d="M1043.5,295 L1043.5,298.3" fill="none" stroke="#1c1c1c" stroke-width="0.8" stroke-linejoin="miter"/><path d="M1071.4,300.4 L1089.5,300.4" fill="none" stroke="#1c1c1c" stroke-width="0.96" stroke-linejoin="miter"/><path d="M1040,302.4 L1089.5,302.4" fill="none" stroke="#1c1c1c" stroke-width="1.04" stroke-linejoin="miter"/><path d="M1057.3,302.4 L1057.3,305.7" fill="none" stroke="#1c1c1c" stroke-width="0.8" stroke-linejoin="miter"/><path d="M1057.3,305.7 L1089.5,305.7" fill="none" stroke="#1c1c1c" stroke-width="0.88" stroke-dasharray="4,2.2"/><path d="M1089.5,295 L1089.5,355" fill="none" stroke="#1c1c1c" stroke-width="0.88" stroke-linejoin="miter"/><rect x="1090" y="295" width="22" height="6" fill="#d8d8d8" opacity="0.7"/><path d="M1071,308.2 L1089,308.2" fill="none" stroke="#1c1c1c" stroke-width="0.72" stroke-dasharray="2,1.5"/><rect x="1040" y="313" width="9" height="3" fill="none" stroke="#1c1c1c" stroke-width="1"/><path d="M1073.5,311.9 L1073.5,324.7" fill="none" stroke="#1c1c1c" stroke-width="0.8" stroke-linejoin="miter"/><path d="M1073.5,336.3 L1073.5,352" fill="none" stroke="#1c1c1c" stroke-width="0.8" stroke-linejoin="miter"/><path d="M1078.5,311.9 L1078.5,324.7" fill="none" stroke="#1c1c1c" stroke-width="0.8" stroke-linejoin="miter"/><path d="M1078.5,336.3 L1078.5,352" fill="none" stroke="#1c1c1c" stroke-width="0.8" stroke-linejoin="miter"/><path d="M1081.3,311.9 L1081.3,324.7" fill="none" stroke="#1c1c1c" stroke-width="0.8" stroke-linejoin="miter"/><path d="M1081.3,336.3 L1081.3,352" fill="none" stroke="#1c1c1c" stroke-width="0.8" stroke-linejoin="miter"/><path d="M1086,311.9 L1086,324.7" fill="none" stroke="#1c1c1c" stroke-width="0.8" stroke-linejoin="miter"/><path d="M1086,336.3 L1086,352" fill="none" stroke="#1c1c1c" stroke-width="0.8" stroke-linejoin="miter"/><circle cx="1074.5" cy="318.5" r="2.1" fill="#fff" stroke="#1c1c1c" stroke-width="0.9"/><circle cx="1074.5" cy="342.5" r="2.1" fill="#fff" stroke="#1c1c1c" stroke-width="0.9"/><circle cx="1082.2" cy="318.5" r="2.1" fill="#fff" stroke="#1c1c1c" stroke-width="0.9"/><circle cx="1082.2" cy="342.5" r="2.1" fill="#fff" stroke="#1c1c1c" stroke-width="0.9"/><path d="M1071,325.6 L1111,325.6" fill="none" stroke="#888" stroke-width="1"/><path d="M1067.3,328.4 L1111,328.4" fill="none" stroke="#1c1c1c" stroke-width="1.04" stroke-linejoin="miter"/><path d="M1067.3,328.4 L1067.3,373.1" fill="none" stroke="#1c1c1c" stroke-width="0.96" stroke-linejoin="miter"/><path d="M1065.8,343.5 L1067.3,340.0 L1068.8,343.5 Z" fill="#1c1c1c"/><path d="M1099.5,318 L1099.5,333" fill="none" stroke="#888" stroke-width="0.8"/><rect x="1102.8" y="314.8" width="9" height="5" fill="#d6d6d6" stroke="#333" stroke-width="0.9"/><path d="M1104.8,315.8 L1105.8,318.8 M1105.8,315.8 L1104.8,318.8" fill="none" stroke="#333" stroke-width="0.6"/><line x1="1108.8" y1="314.8" x2="1108.8" y2="319.8" stroke="#333" stroke-width="0.6"/><path d="M1102.8,317.3 l-2,-2 v4 z" fill="#1c1c1c"/><path d="M1073,336.3 L1150.4,336.3" fill="none" stroke="#1c1c1c" stroke-width="1.12" stroke-linejoin="miter"/><path d="M1081.3,338.4 L1150.4,338.4" fill="none" stroke="#1c1c1c" stroke-width="0.96" stroke-linejoin="miter"/><rect x="1102.8" y="340.4" width="21" height="5.8" fill="#5a5a5a" stroke="#1c1c1c" stroke-width="0.9"/><line x1="1109.8" y1="340.4" x2="1109.8" y2="346.2" stroke="#eee" stroke-width="0.7"/><line x1="1116.8" y1="340.4" x2="1116.8" y2="346.2" stroke="#eee" stroke-width="0.7"/><path d="M1070.5,352 L1111,352" fill="none" stroke="#1c1c1c" stroke-width="0.88" stroke-linejoin="miter"/><path d="M1040,350.3 L1062,350.3" fill="none" stroke="#1c1c1c" stroke-width="0.88" stroke-dasharray="4,2.2"/><rect x="1092" y="333.0" width="16" height="2.0" fill="#444" opacity="0.38"/><rect x="1092" y="337.0" width="8" height="2.0" fill="#444" opacity="0.38"/><rect x="1094" y="346.0" width="6" height="2.0" fill="#444" opacity="0.38"/><rect x="1113.6" y="257.4" width="10.8" height="24.4" fill="none" stroke="#1c1c1c" stroke-width="1.2"/><path d="M1073,259.5 L1150.5,259.5" fill="none" stroke="#1c1c1c" stroke-width="0.96" stroke-dasharray="4.5,2.5"/><path d="M1073,263.2 L1150.5,263.2" fill="none" stroke="#1c1c1c" stroke-width="0.96" stroke-dasharray="4.5,2.5"/><path d="M1113.6,268.2 L1150.5,268.2" fill="none" stroke="#1c1c1c" stroke-width="0.96" stroke-linejoin="miter"/><path d="M1075,271.6 L1150.5,271.6 L1150.5,274.8" fill="none" stroke="#1c1c1c" stroke-width="0.96" stroke-dasharray="4.5,2.5"/><path d="M1097,277.3 L1150.5,277.3 L1150.5,280.5" fill="none" stroke="#1c1c1c" stroke-width="0.96" stroke-dasharray="4.5,2.5"/><rect x="1109" y="275.5" width="10.8" height="3.5" fill="#5a5a5a" stroke="#1c1c1c" stroke-width="0.9"/><line x1="1112.6" y1="275.5" x2="1112.6" y2="279.0" stroke="#eee" stroke-width="0.7"/><line x1="1116.2" y1="275.5" x2="1116.2" y2="279.0" stroke="#eee" stroke-width="0.7"/><path d="M1097,271.6 L1097,280.1 L1113.6,280.1" fill="none" stroke="#1c1c1c" stroke-width="0.88" stroke-linejoin="miter"/><path d="M1111.6,281 L1111.6,286.7" fill="none" stroke="#1c1c1c" stroke-width="0.88" stroke-linejoin="miter"/><rect x="1102" y="286.7" width="20" height="5.4" fill="#5a5a5a" stroke="#1c1c1c" stroke-width="0.9"/><line x1="1108.6666666666667" y1="286.7" x2="1108.6666666666667" y2="292.09999999999997" stroke="#eee" stroke-width="0.7"/><line x1="1115.3333333333333" y1="286.7" x2="1115.3333333333333" y2="292.09999999999997" stroke="#eee" stroke-width="0.7"/><path d="M1098,290.5 L1127,290.5" fill="none" stroke="#1c1c1c" stroke-width="0.88" stroke-linejoin="miter"/><path d="M1098,290.5 L1098,295 L1090,295" fill="none" stroke="#1c1c1c" stroke-width="0.8" stroke-linejoin="miter"/><path d="M1091,294.6 L1150.5,294.6" fill="none" stroke="#888" stroke-width="0.72" stroke-dasharray="3,2"/><path d="M1075,266 L1095,266" fill="none" stroke="#999" stroke-width="0.8"/><path d="M1080,270 L1080,282" fill="none" stroke="#999" stroke-width="0.8"/><path d="M1083,268 L1086,274 L1089,268 M1084,276 h5" fill="none" stroke="#666" stroke-width="0.8"/><rect x="1080" y="285.0" width="8" height="2.0" fill="#666" opacity="0.38"/><path d="M1071,283 L1097,283 L1097,287" fill="none" stroke="#999" stroke-width="0.8"/><path d="M1071,287.2 L1090,287.2" fill="none" stroke="#999" stroke-width="0.8"/><path d="M1125,286 L1140,286 L1140,295" fill="none" stroke="#999" stroke-width="0.8"/><rect x="1152" y="259.0" width="6" height="2.0" fill="#333" opacity="0.38"/><rect x="1152" y="265.0" width="6" height="2.0" fill="#333" opacity="0.38"/><rect x="1152" y="268.0" width="6" height="2.0" fill="#333" opacity="0.38"/><rect x="1152" y="274.0" width="6" height="2.0" fill="#333" opacity="0.38"/><rect x="1152" y="279.0" width="6" height="2.0" fill="#333" opacity="0.38"/><rect x="1152" y="282.0" width="6" height="2.0" fill="#333" opacity="0.38"/><rect x="1152" y="287.0" width="6" height="2.0" fill="#333" opacity="0.38"/><rect x="1152" y="291.0" width="6" height="2.0" fill="#333" opacity="0.38"/><rect x="1152" y="304.0" width="6" height="2.0" fill="#333" opacity="0.38"/><rect x="1152" y="311.0" width="6" height="2.0" fill="#333" opacity="0.38"/><rect x="1152" y="317.0" width="6" height="2.0" fill="#333" opacity="0.38"/><rect x="1152" y="334.0" width="6" height="2.0" fill="#333" opacity="0.38"/><rect x="1152" y="342.0" width="6" height="2.0" fill="#333" opacity="0.38"/><rect x="1152" y="350.0" width="6" height="2.0" fill="#333" opacity="0.38"/><rect x="1152" y="356.0" width="6" height="2.0" fill="#333" opacity="0.38"/><rect x="1152" y="364.0" width="6" height="2.0" fill="#333" opacity="0.38"/><rect x="1152" y="374.0" width="6" height="2.0" fill="#333" opacity="0.38"/><rect x="1152" y="380.0" width="6" height="2.0" fill="#333" opacity="0.38"/><rect x="1152" y="396.0" width="6" height="2.0" fill="#333" opacity="0.38"/><rect x="1152" y="401.0" width="6" height="2.0" fill="#333" opacity="0.38"/><rect x="1152" y="408.0" width="6" height="2.0" fill="#333" opacity="0.38"/><rect x="1142" y="279.0" width="8" height="2.0" fill="#777" opacity="0.38"/><rect x="1142" y="283.0" width="8" height="2.0" fill="#777" opacity="0.38"/><path d="M1155,298.5 L1127,307" fill="none" stroke="#555" stroke-width="0.56" stroke-linejoin="miter"/><path d="M1150.4,313 L1168,322" fill="none" stroke="#555" stroke-width="0.56" stroke-linejoin="miter"/><path d="M1120,304 L1146,304" fill="none" stroke="#888" stroke-width="1"/><circle cx="1126" cy="307" r="1.8" fill="none" stroke="#555" stroke-width="0.8"/><rect x="1130" y="306.0" width="8" height="2.0" fill="#444" opacity="0.38"/><path d="M1089.7,309.5 L1235.6,309.5 L1235.6,297.8" fill="none" stroke="#1c1c1c" stroke-width="1.28" stroke-linejoin="miter"/><path d="M1176.5,307.4 L1181.4,309.5 L1176.5,311.6 Z" fill="#1c1c1c"/><path d="M1095,314 L1150,314" fill="none" stroke="#8a8a8a" stroke-width="1.2"/><path d="M1113,317 L1135,317 L1135,323" fill="none" stroke="#888" stroke-width="0.8"/><path d="M1125,322 L1148,322" fill="none" stroke="#999" stroke-width="0.8"/><rect x="1138" y="319.0" width="8" height="2.0" fill="#777" opacity="0.38"/><rect x="1120" y="326.0" width="6" height="2.0" fill="#777" opacity="0.38"/><path d="M1010,354.8 L1045,354.8" fill="none" stroke="#1c1c1c" stroke-width="0.88" stroke-linejoin="miter"/><path d="M977.4,358.2 L1060,358.2" fill="none" stroke="#1c1c1c" stroke-width="1.2" stroke-linejoin="miter"/><path d="M977.4,359.8 L1040,359.8" fill="none" stroke="#1c1c1c" stroke-width="0.8" stroke-linejoin="miter"/><path d="M1009.3,311.5 L1009.3,440" fill="none" stroke="#1c1c1c" stroke-width="1.2" stroke-linejoin="miter"/><rect x="999.2" y="362" width="21.6" height="5" fill="#5a5a5a" stroke="#1c1c1c" stroke-width="0.9"/><line x1="1006.4000000000001" y1="362" x2="1006.4000000000001" y2="367" stroke="#eee" stroke-width="0.7"/><line x1="1013.6" y1="362" x2="1013.6" y2="367" stroke="#eee" stroke-width="0.7"/><path d="M977.4,365 L985,365 L985,361.5 L992,361.5 L992,365 L999,365" fill="none" stroke="#1c1c1c" stroke-width="0.88" stroke-dasharray="4,2.2"/><path d="M977.4,369.2 L1000,369.2" fill="none" stroke="#1c1c1c" stroke-width="0.88" stroke-dasharray="4,2.2"/><path d="M1010,369.2 L1031,369.2" fill="none" stroke="#1c1c1c" stroke-width="0.88" stroke-dasharray="4,2.2"/><path d="M1009.3,373.1 L1038.5,373.1" fill="none" stroke="#1c1c1c" stroke-width="1.28" stroke-linejoin="miter"/><rect x="971.3" y="372.6" width="6.2" height="4.8" fill="none" stroke="#1c1c1c" stroke-width="1.1"/><path d="M992,375 L1045,375" fill="none" stroke="#1c1c1c" stroke-width="0.72" stroke-linejoin="miter"/><path d="M992.4,377.9 L1031,377.9" fill="none" stroke="#1c1c1c" stroke-width="0.88" stroke-dasharray="4,2.2"/><path d="M977,380.8 H1009" fill="none" stroke="#9a9a9a" stroke-width="2"/><path d="M977,383.2 H1009" fill="none" stroke="#9a9a9a" stroke-width="1.4"/><rect x="999.6" y="385" width="23" height="5" fill="#d6d6d6" stroke="#333" stroke-width="0.9"/><path d="M1001.6,386 L1007.2666666666667,389 M1007.2666666666667,386 L1001.6,389" fill="none" stroke="#333" stroke-width="0.6"/><line x1="1014.9333333333334" y1="385" x2="1014.9333333333334" y2="390" stroke="#333" stroke-width="0.6"/><path d="M999.6,387.5 l-2,-2 v4 z" fill="#1c1c1c"/><rect x="1013" y="381.0" width="11" height="2.0" fill="#444" opacity="0.38"/><path d="M989,388.5 L1000,388.5" fill="none" stroke="#777" stroke-width="0.72" stroke-dasharray="2.5,1.5"/><path d="M994.5,388.5 L994.5,404.3 L1025,404.3 L1025,390" fill="none" stroke="#888" stroke-width="0.64" stroke-dasharray="2.5,1.5"/><path d="M1009,402.5 L1076,402.5" fill="none" stroke="#1c1c1c" stroke-width="1.12" stroke-linejoin="miter"/><path d="M1025,396.7 L1057,396.7" fill="none" stroke="#1c1c1c" stroke-width="0.96" stroke-dasharray="4,2.2"/><path d="M1025,399.6 L1057,399.6" fill="none" stroke="#1c1c1c" stroke-width="0.96" stroke-dasharray="4,2.2"/><path d="M1030.4,396 L1030.4,420" fill="none" stroke="#1c1c1c" stroke-width="0.72" stroke-dasharray="4,2.2"/><path d="M977,407.7 L1065,407.7" fill="none" stroke="#999" stroke-width="1"/><rect x="972" y="354.0" width="4" height="2.0" fill="#333" opacity="0.38"/><rect x="971" y="362.0" width="5" height="2.0" fill="#333" opacity="0.38"/><rect x="972" y="366.0" width="5" height="2.0" fill="#333" opacity="0.38"/><rect x="973" y="384.0" width="4" height="2.0" fill="#333" opacity="0.38"/><rect x="972" y="396.0" width="5" height="2.0" fill="#333" opacity="0.38"/><rect x="973" y="404.0" width="4" height="2.0" fill="#333" opacity="0.38"/><rect x="978" y="366" width="7" height="3" fill="#333"/><rect x="978" y="386" width="8" height="3" fill="#444"/><rect x="978" y="396" width="8" height="2.5" fill="#444"/><path d="M1046.3,358.2 L1046.3,373.5" fill="none" stroke="#1c1c1c" stroke-width="0.88" stroke-linejoin="miter"/><path d="M1052,358.2 L1052,373.5" fill="none" stroke="#1c1c1c" stroke-width="0.88" stroke-linejoin="miter"/><path d="M1044.98,365.8 L1046.3,368.88 L1047.62,365.8 Z" fill="#1c1c1c"/><path d="M1050.68,365.8 L1052,368.88 L1053.32,365.8 Z" fill="#1c1c1c"/><path d="M1062.6,350 L1062.6,420" fill="none" stroke="#1c1c1c" stroke-width="0.72" stroke-dasharray="3,2"/><path d="M1067.8,373.1 H1084.3" fill="none" stroke="#8a8a8a" stroke-width="1.8"/><path d="M1084.3,373.1 L1084.3,401.8" fill="none" stroke="#1c1c1c" stroke-width="0.96" stroke-linejoin="miter"/><path d="M1067,353.4 L1113,353.4" fill="none" stroke="#1c1c1c" stroke-width="0.88" stroke-linejoin="miter"/><path d="M1063,355.3 L1150,355.3" fill="none" stroke="#1c1c1c" stroke-width="0.88" stroke-dasharray="4,2.2"/><path d="M1063,358.2 L1089.6,358.2 L1089.6,368" fill="none" stroke="#1c1c1c" stroke-width="0.88" stroke-dasharray="4,2.2"/><path d="M1065.5,368.3 L1111.2,368.3" fill="none" stroke="#1c1c1c" stroke-width="0.88" stroke-linejoin="miter"/><rect x="1092" y="358.0" width="9" height="2.0" fill="#444" opacity="0.38"/><rect x="1099.7" y="363" width="22" height="3.8" fill="#5a5a5a" stroke="#1c1c1c" stroke-width="0.9"/><line x1="1107.0333333333333" y1="363" x2="1107.0333333333333" y2="366.8" stroke="#eee" stroke-width="0.7"/><line x1="1114.3666666666668" y1="363" x2="1114.3666666666668" y2="366.8" stroke="#eee" stroke-width="0.7"/><path d="M1098.7,366 L1098.7,368.3" fill="none" stroke="#1c1c1c" stroke-width="0.8" stroke-linejoin="miter"/><path d="M1111.7,358 L1111.7,373" fill="none" stroke="#1c1c1c" stroke-width="0.8" stroke-linejoin="miter"/><path d="M1110,358.5 L1150.4,358.5" fill="none" stroke="#1c1c1c" stroke-width="1.12" stroke-linejoin="miter"/><path d="M1110,360.3 L1150.4,360.3" fill="none" stroke="#1c1c1c" stroke-width="0.88" stroke-linejoin="miter"/><path d="M1113,370.7 L1150,370.7" fill="none" stroke="#1c1c1c" stroke-width="0.88" stroke-dasharray="4,2.2"/><path d="M1122,366 L1150,366" fill="none" stroke="#1c1c1c" stroke-width="0.8" stroke-dasharray="4,2.2"/><path d="M1120,375.8 L1150,375.8" fill="none" stroke="#1c1c1c" stroke-width="0.8" stroke-dasharray="4,2.2"/><path d="M1124.4,372 L1124.4,400" fill="none" stroke="#1c1c1c" stroke-width="0.8" stroke-dasharray="4,2.2"/><path d="M1062,382.7 L1099,382.7" fill="none" stroke="#888" stroke-width="0.72" stroke-dasharray="3,2"/><rect x="1103" y="380" width="10" height="4.5" fill="#d6d6d6" stroke="#333" stroke-width="0.9"/><path d="M1105,381 L1106.3333333333333,383.5 M1106.3333333333333,381 L1105,383.5" fill="none" stroke="#333" stroke-width="0.6"/><line x1="1109.6666666666667" y1="380" x2="1109.6666666666667" y2="384.5" stroke="#333" stroke-width="0.6"/><path d="M1103,382.25 l-2,-2 v4 z" fill="#1c1c1c"/><circle cx="1101" cy="383" r="1" fill="#1c1c1c"/><rect x="1094" y="380" width="2.5" height="12" fill="#888" opacity="0.7"/><path d="M1089.6,378 L1089.6,405" fill="none" stroke="#555" stroke-width="0.64" stroke-dasharray="2,2"/><path d="M1058,391.9 H1113" fill="none" stroke="#9a9a9a" stroke-width="1.6"/><path d="M1084.3,392.3 L1113,392.3" fill="none" stroke="#1c1c1c" stroke-width="1.12" stroke-linejoin="miter"/><circle cx="1084.3" cy="392" r="1.4" fill="#1c1c1c"/><path d="M1040,396.7 L1057,396.7" fill="none" stroke="#1c1c1c" stroke-width="0.88" stroke-dasharray="4,2.2"/><path d="M1112,396.7 L1150,396.7" fill="none" stroke="#1c1c1c" stroke-width="0.88" stroke-linejoin="miter"/><path d="M1112,399.6 L1150,399.6" fill="none" stroke="#1c1c1c" stroke-width="0.88" stroke-linejoin="miter"/><path d="M1112,402.9 L1150,402.9" fill="none" stroke="#1c1c1c" stroke-width="0.88" stroke-linejoin="miter"/><path d="M1058,401.8 L1084.3,401.8" fill="none" stroke="#1c1c1c" stroke-width="1.12" stroke-linejoin="miter"/><circle cx="1076" cy="401.5" r="1.5" fill="#1c1c1c"/><path d="M1082.3,395.2 L1111.2,395.2 L1111.2,406.3 L1082.3,406.3 L1082.3,395.2" fill="none" stroke="#999" stroke-width="0.8"/><rect x="1092" y="399.5" width="11" height="3" fill="#777"/><circle cx="1070.3" cy="407.7" r="2.2" fill="#eee" stroke="#1c1c1c" stroke-width="1"/><path d="M1070.3,410 L1070.3,444.4" fill="none" stroke="#1c1c1c" stroke-width="0.88" stroke-linejoin="miter" stroke-dasharray="3,2"/><rect x="1074" y="407.2" width="19" height="1.8" fill="#555" opacity="0.38"/><rect x="1074" y="411.2" width="19" height="1.8" fill="#555" opacity="0.38"/><rect x="1074" y="414.2" width="19" height="1.8" fill="#555" opacity="0.38"/><path d="M1112.6,311.9 L1112.6,425.2 L1181.3,425.2 L1181.3,499" fill="none" stroke="#1c1c1c" stroke-width="1.2" stroke-linejoin="miter"/><path d="M1140.8,423.21999999999997 L1136.18,425.2 L1140.8,427.18 Z" fill="#1c1c1c"/><rect x="1000" y="255.5" width="6.6000000000000005" height="2" fill="#444" opacity="0.38"/><rect x="1010" y="255.5" width="6.6000000000000005" height="2" fill="#444" opacity="0.38"/><rect x="1031" y="255.5" width="4.4" height="2" fill="#444" opacity="0.38"/><rect x="1037" y="255.5" width="4.4" height="2" fill="#444" opacity="0.38"/><rect x="1044" y="255.5" width="4.4" height="2" fill="#444" opacity="0.38"/><rect x="1049" y="255.5" width="4.4" height="2" fill="#444" opacity="0.38"/><rect x="1055" y="255.5" width="6.6000000000000005" height="2" fill="#444" opacity="0.38"/><text x="1053" y="257.5" font-size="5.5" fill="#000" textLength="12" lengthAdjust="spacingAndGlyphs">T1T2</text><text x="1009" y="422.5" font-size="4.5" fill="#000">P1</text><text x="1026" y="422.5" font-size="4.5" fill="#000">PT</text><text x="1056" y="422.5" font-size="4.5" fill="#000">PA</text><text x="1073" y="422.5" font-size="4.5" fill="#000">PH</text><text x="1108" y="422.5" font-size="4.5" fill="#000">P2</text><path d="M1200.3,235.3 L1259,235.3 L1259,306.2 L1200.3,306.2 L1200.3,235.3" fill="none" stroke="#9c9c9c" stroke-width="0.88" stroke-dasharray="6,1.5,1.5,1.5"/><rect x="1207" y="261.2" width="45" height="37" fill="none" stroke="#333" stroke-width="1.5"/><rect x="1216" y="234.3" width="10" height="28.1" fill="#fff" stroke="#1c1c1c" stroke-width="1.2"/><rect x="1216.6" y="250" width="8.8" height="12" fill="#e8e8e8"/><line x1="1216" y1="235" x2="1226" y2="235" stroke="#1c1c1c" stroke-width="1.8"/><line x1="1217.5" y1="236" x2="1217.5" y2="246" stroke="#555" stroke-width="0.5"/><line x1="1224.5" y1="236" x2="1224.5" y2="246" stroke="#555" stroke-width="0.5"/><rect x="1219.4" y="229" width="2.9" height="18.1" fill="#fff" stroke="#1c1c1c" stroke-width="1"/><line x1="1216" y1="246.8" x2="1226" y2="246.8" stroke="#1c1c1c" stroke-width="1.4"/><line x1="1216" y1="249.5" x2="1226" y2="249.5" stroke="#1c1c1c" stroke-width="1.1"/><rect x="1233.4" y="234.3" width="8.3" height="28.1" fill="#fff" stroke="#1c1c1c" stroke-width="1.2"/><rect x="1234.0" y="250" width="7.1000000000000005" height="12" fill="#e8e8e8"/><line x1="1233.4" y1="235" x2="1241.7" y2="235" stroke="#1c1c1c" stroke-width="1.8"/><line x1="1234.9" y1="236" x2="1234.9" y2="246" stroke="#555" stroke-width="0.5"/><line x1="1240.2" y1="236" x2="1240.2" y2="246" stroke="#555" stroke-width="0.5"/><rect x="1236.3" y="229" width="2.9" height="18.1" fill="#fff" stroke="#1c1c1c" stroke-width="1"/><line x1="1233.4" y1="246.8" x2="1241.7" y2="246.8" stroke="#1c1c1c" stroke-width="1.4"/><line x1="1233.4" y1="249.5" x2="1241.7" y2="249.5" stroke="#1c1c1c" stroke-width="1.1"/><path d="M1229.5,220 L1220.8,229" fill="none" stroke="#1c1c1c" stroke-width="0.72" stroke-linejoin="miter"/><path d="M1229.5,220 L1237.6,229" fill="none" stroke="#1c1c1c" stroke-width="0.72" stroke-linejoin="miter"/><circle cx="1235.6" cy="298" r="1.2" fill="#1c1c1c"/><path d="M1150,313.7 H1241.6 V306.2" fill="none" stroke="#9c9c9c" stroke-width="1.2" stroke-dasharray="6,1.5,1.5,1.5"/><path d="M1220.8,311.9 L1216.6,313.7 L1220.8,315.5 Z" fill="#9c9c9c"/><path d="M1156,299 L1130,307" fill="none" stroke="#555" stroke-width="0.56" stroke-linejoin="miter"/><path d="M1150.4,313 L1168,322" fill="none" stroke="#555" stroke-width="0.56" stroke-linejoin="miter"/><rect x="798.3" y="467.3" width="89.6" height="42.2" fill="#e6e6e6"/><path d="M798.3,467.3 L798.3,509.5 L887.9,509.5 L887.9,467.3" fill="none" stroke="#bbb" stroke-width="0.64" stroke-dasharray="3,1"/><path d="M798.3,467.3 L830,467.3" fill="none" stroke="#bbb" stroke-width="0.8"/><path d="M837,467.3 L887.9,467.3" fill="none" stroke="#bbb" stroke-width="0.8"/><rect x="830.5" y="458.2" width="6.5" height="9.1" fill="#eee" stroke="#888" stroke-width="0.8"/><circle cx="833.7" cy="462.7" r="2" fill="#fff" stroke="#1c1c1c" stroke-width="0.8"/><path d="M833.6,458.2 L833.6,435.5 L934,435.5 L934,515.5" fill="none" stroke="#1c1c1c" stroke-width="0.96" stroke-dasharray="4,2.2"/><path d="M887.6,433.7 L883.4,435.5 L887.6,437.3 Z" fill="#1c1c1c"/><path d="M862,467 L866,457.5" fill="none" stroke="#1c1c1c" stroke-width="0.64" stroke-linejoin="miter"/><path d="M818.5,488 V471.9 H867 V488" fill="none" stroke="#a8a8a8" stroke-width="1.5"/><path d="M821.8,488 V475.5 H863.7 V488" fill="none" stroke="#a8a8a8" stroke-width="1.5"/><path d="M833.6,467 L833.6,471.9 L818.5,471.9 L818.5,488" fill="none" stroke="#1c1c1c" stroke-width="0.88" stroke-dasharray="2,1"/><circle cx="845.6" cy="475.5" r="0.9" fill="#1c1c1c"/><path d="M847,468 L845.6,475" fill="none" stroke="#1c1c1c" stroke-width="0.48" stroke-linejoin="miter"/><path d="M809.2,479 h5 l-2.5,2.5 z" fill="none" stroke="#444" stroke-width="0.6"/><rect x="808.2" y="486.3" width="7" height="5.8" fill="#d8d8d8" stroke="#333" stroke-width="0.9"/><rect x="810.2" y="492" width="3" height="5" fill="#fff" stroke="#555" stroke-width="0.7"/><path d="M809.7,484 l4,-2 M809.7,486 l4,-2" fill="none" stroke="#333" stroke-width="0.6"/><path d="M825.8,479 h5 l-2.5,2.5 z" fill="none" stroke="#444" stroke-width="0.6"/><rect x="824.8" y="486.3" width="7" height="5.8" fill="#d8d8d8" stroke="#333" stroke-width="0.9"/><rect x="826.8" y="492" width="3" height="5" fill="#fff" stroke="#555" stroke-width="0.7"/><path d="M826.3,484 l4,-2 M826.3,486 l4,-2" fill="none" stroke="#333" stroke-width="0.6"/><path d="M854.0,479 h5 l-2.5,2.5 z" fill="none" stroke="#444" stroke-width="0.6"/><rect x="853.0" y="486.3" width="7" height="5.8" fill="#d8d8d8" stroke="#333" stroke-width="0.9"/><rect x="855.0" y="492" width="3" height="5" fill="#fff" stroke="#555" stroke-width="0.7"/><path d="M854.5,484 l4,-2 M854.5,486 l4,-2" fill="none" stroke="#333" stroke-width="0.6"/><path d="M869.9,479 h5 l-2.5,2.5 z" fill="none" stroke="#444" stroke-width="0.6"/><rect x="868.9" y="486.3" width="7" height="5.8" fill="#d8d8d8" stroke="#333" stroke-width="0.9"/><rect x="870.9" y="492" width="3" height="5" fill="#fff" stroke="#555" stroke-width="0.7"/><path d="M870.4,484 l4,-2 M870.4,486 l4,-2" fill="none" stroke="#333" stroke-width="0.6"/><path d="M803,489.2 L808,489.2" fill="none" stroke="#1c1c1c" stroke-width="0.72" stroke-linejoin="miter"/><path d="M831.8,489.2 L838.7,489.2" fill="none" stroke="#1c1c1c" stroke-width="0.88" stroke-linejoin="miter"/><path d="M815,489.2 L825,489.2" fill="none" stroke="#1c1c1c" stroke-width="0.88" stroke-linejoin="miter"/><path d="M847,489.2 L853,489.2" fill="none" stroke="#1c1c1c" stroke-width="0.72" stroke-linejoin="miter"/><path d="M860,489.2 L869,489.2" fill="none" stroke="#1c1c1c" stroke-width="0.88" stroke-linejoin="miter"/><path d="M876,489.2 L883,489.2" fill="none" stroke="#1c1c1c" stroke-width="0.72" stroke-linejoin="miter"/><path d="M803,489.2 L803,510" fill="none" stroke="#999" stroke-width="1.2"/><path d="M883,489.2 L883,509" fill="none" stroke="#999" stroke-width="1"/><path d="M847,489.2 L847,509" fill="none" stroke="#999" stroke-width="1"/><path d="M803,500 L837,500" fill="none" stroke="#555" stroke-width="0.64" stroke-dasharray="2.5,1.5"/><path d="M847,500 L883,500" fill="none" stroke="#555" stroke-width="0.64" stroke-dasharray="2.5,1.5"/><path d="M838.7,489.2 L838.7,510.2" fill="none" stroke="#1c1c1c" stroke-width="0.88" stroke-dasharray="2,1"/><text x="816" y="504" font-size="3.6" fill="#555" textLength="10" lengthAdjust="spacingAndGlyphs">BOOM</text><text x="858" y="504" font-size="3.6" fill="#555" textLength="16" lengthAdjust="spacingAndGlyphs">BUCKET</text><text x="850" y="509" font-size="3.5" fill="#666" textLength="10" lengthAdjust="spacingAndGlyphs">OPEN</text><text x="870" y="509" font-size="3.5" fill="#666" textLength="12" lengthAdjust="spacingAndGlyphs">CLOSE</text><rect x="872" y="499.5" width="1.5" height="3.5" fill="#1c1c1c"/><rect x="799.4" y="510.2" width="6.2" height="8.2" fill="#eee" stroke="#888" stroke-width="0.8"/><path d="M802.5,511.5 l2.3,2.8 l-2.3,2.8 l-2.3,-2.8 z" fill="none" stroke="#1c1c1c" stroke-width="0.7"/><rect x="834.8" y="510.2" width="6.2" height="8.2" fill="#eee" stroke="#888" stroke-width="0.8"/><path d="M837.9,511.5 l2.3,2.8 l-2.3,2.8 l-2.3,-2.8 z" fill="none" stroke="#1c1c1c" stroke-width="0.7"/><path d="M805,517 L815,524" fill="none" stroke="#1c1c1c" stroke-width="0.56" stroke-linejoin="miter"/><path d="M840,518 L846,525" fill="none" stroke="#1c1c1c" stroke-width="0.56" stroke-linejoin="miter"/><rect x="907.1" y="461.2" width="29.8" height="71.3" fill="#e4e4e4"/><rect x="936.9" y="461.2" width="29.9" height="71.3" fill="#ececec"/><path d="M907.1,461.2 L966.8,461.2 L966.8,498.5" fill="none" stroke="#aaa" stroke-width="0.64" stroke-dasharray="3,1.5"/><path d="M907.1,461.2 L907.1,532.5" fill="none" stroke="#bbb" stroke-width="0.8"/><path d="M966.8,498.5 L966.8,532.5" fill="none" stroke="#1c1c1c" stroke-width="0.88" stroke-linejoin="miter"/><path d="M907.1,532.5 L940,532.5" fill="none" stroke="#1c1c1c" stroke-width="0.96" stroke-linejoin="miter"/><path d="M940,532.5 L966.8,532.5" fill="none" stroke="#1c1c1c" stroke-width="0.96" stroke-dasharray="4,2.2"/><path d="M936.3,461 V532.5" fill="none" stroke="#a8a8a8" stroke-width="1.8"/><path d="M898,490.6 L898,444.3 L990,444.3" fill="none" stroke="#1c1c1c" stroke-width="0.88" stroke-dasharray="4,2.2"/><path d="M898,490.6 L915,490.6" fill="none" stroke="#1c1c1c" stroke-width="0.72" stroke-dasharray="2,1.2"/><path d="M979.6,442.5 L983.8000000000001,444.3 L979.6,446.1 Z" fill="#1c1c1c"/><path d="M893,495 L912,497" fill="none" stroke="#1c1c1c" stroke-width="0.56" stroke-linejoin="miter"/><path d="M973,459 L951,472" fill="none" stroke="#1c1c1c" stroke-width="0.56" stroke-linejoin="miter"/><path d="M967,523.5 L979,526.5" fill="none" stroke="#1c1c1c" stroke-width="0.56" stroke-linejoin="miter"/><rect x="909" y="462.5" width="21" height="2.2" fill="#333" opacity="0.8"/><rect x="903" y="465" width="3" height="1.5" fill="#555"/><path d="M912,471.2 L929.6,471.2 L929.6,476.2 L912,476.2 L912,471.2" fill="none" stroke="#555" stroke-width="0.64" stroke-dasharray="1.5,1"/><path d="M916,472.2 v3 M921,472.2 l3,3 M924,472.2 l-3,3" fill="none" stroke="#333" stroke-width="0.7"/><path d="M912.6,493.7 L929.6,493.7 L929.6,498.7 L912.6,498.7 L912.6,493.7" fill="none" stroke="#555" stroke-width="0.64" stroke-dasharray="1.5,1"/><path d="M916.6,494.7 v3 M921.6,494.7 l3,3 M924.6,494.7 l-3,3" fill="none" stroke="#333" stroke-width="0.7"/><path d="M912,517.3 L929.6,517.3 L929.6,522.3 L912,522.3 L912,517.3" fill="none" stroke="#555" stroke-width="0.64" stroke-dasharray="1.5,1"/><path d="M916,518.3 v3 M921,518.3 l3,3 M924,518.3 l-3,3" fill="none" stroke="#333" stroke-width="0.7"/><path d="M942.3,471.2 L956.9,471.2 L956.9,476.2 L942.3,476.2 L942.3,471.2" fill="none" stroke="#555" stroke-width="0.64" stroke-dasharray="1.5,1"/><path d="M946,472 v3 M950,472 l3,3 M953,472 l-3,3" fill="none" stroke="#333" stroke-width="0.7"/><path d="M912,479.1 L957,479.1" fill="none" stroke="#555" stroke-width="0.64" stroke-dasharray="2,1.2"/><circle cx="927" cy="479.1" r="0.8" fill="#1c1c1c"/><circle cx="951" cy="479.1" r="0.8" fill="#1c1c1c"/><path d="M957,472.4 L1001,472.4" fill="none" stroke="#1c1c1c" stroke-width="0.96" stroke-linejoin="miter"/><path d="M959,474.4 L961,470.4 M961,474.4 L963,470.4" fill="none" stroke="#1c1c1c" stroke-width="0.8"/><path d="M976,474.4 L978,470.4 M978,474.4 L980,470.4" fill="none" stroke="#1c1c1c" stroke-width="0.8"/><path d="M991,474.4 L993,470.4 M993,474.4 L995,470.4" fill="none" stroke="#1c1c1c" stroke-width="0.8"/><path d="M990.9,470.9 L987.4,472.4 L990.9,473.9 Z" fill="#1c1c1c"/><circle cx="937.5" cy="468" r="0.9" fill="#1c1c1c"/><path d="M915,482.8 L945,482.8" fill="none" stroke="#888" stroke-width="0.8"/><path d="M945,482.8 L1206.8,482.8 L1206.8,499" fill="none" stroke="#555" stroke-width="0.88" stroke-dasharray="4,2.2"/><path d="M1029,481.0 L1024.8,482.8 L1029,484.6 Z" fill="#555"/><path d="M946,476 L946,494" fill="none" stroke="#888" stroke-width="0.8"/><text x="903" y="489" font-size="4" fill="#333" textLength="6" lengthAdjust="spacingAndGlyphs">C3</text><path d="M931.4,494 L931.4,502.8" fill="none" stroke="#1c1c1c" stroke-width="1.12" stroke-linejoin="miter"/><path d="M915,502.8 L937,502.8" fill="none" stroke="#1c1c1c" stroke-width="0.8" stroke-linejoin="miter"/><path d="M915,505.8 L957,505.8" fill="none" stroke="#777" stroke-width="0.64" stroke-dasharray="2,1.2"/><rect x="942.3" y="494.3" width="15.7" height="4.8" fill="#3a3a3a" stroke="#1c1c1c" stroke-width="0.8"/><line x1="947" y1="494.3" x2="947" y2="499.1" stroke="#ccc" stroke-width="0.6"/><line x1="952" y1="494.3" x2="952" y2="499.1" stroke="#ccc" stroke-width="0.6"/><rect x="954" y="488" width="10" height="1.8" fill="#555" opacity="0.6"/><path d="M945.4,499 L945.4,512.5 L966.8,512.5" fill="none" stroke="#1c1c1c" stroke-width="0.88" stroke-linejoin="miter"/><path d="M948.4,499 L948.4,502.6 L966.8,502.6" fill="none" stroke="#1c1c1c" stroke-width="0.88" stroke-linejoin="miter"/><text x="967.5" y="503" font-size="3.8" fill="#333" textLength="4" lengthAdjust="spacingAndGlyphs">B4</text><text x="967.5" y="512" font-size="3.8" fill="#333" textLength="4" lengthAdjust="spacingAndGlyphs">B5</text><text x="968" y="482" font-size="3.8" fill="#333">B</text><path d="M933.8,461 L933.8,515.5" fill="none" stroke="#1c1c1c" stroke-width="0.8" stroke-dasharray="4,2.2"/><path d="M933.8,515.5 L1096,515.5 L1096,508.4" fill="none" stroke="#1c1c1c" stroke-width="0.96" stroke-linejoin="miter"/><path d="M934,517.5 L936,513.5 M936,517.5 L938,513.5" fill="none" stroke="#1c1c1c" stroke-width="0.8"/><path d="M954,517.5 L956,513.5 M956,517.5 L958,513.5" fill="none" stroke="#1c1c1c" stroke-width="0.8"/><path d="M975,517.5 L977,513.5 M977,517.5 L979,513.5" fill="none" stroke="#1c1c1c" stroke-width="0.8"/><path d="M995,517.5 L997,513.5 M997,517.5 L999,513.5" fill="none" stroke="#1c1c1c" stroke-width="0.8"/><path d="M1015,517.5 L1017,513.5 M1017,517.5 L1019,513.5" fill="none" stroke="#1c1c1c" stroke-width="0.8"/><path d="M1033,517.5 L1035,513.5 M1035,517.5 L1037,513.5" fill="none" stroke="#1c1c1c" stroke-width="0.8"/><path d="M1054,517.5 L1056,513.5 M1056,517.5 L1058,513.5" fill="none" stroke="#1c1c1c" stroke-width="0.8"/><path d="M1074,517.5 L1076,513.5 M1076,517.5 L1078,513.5" fill="none" stroke="#1c1c1c" stroke-width="0.8"/><path d="M1027.9,514.0 L1024.4,515.5 L1027.9,517.0 Z" fill="#1c1c1c"/><rect x="903" y="508.5" width="22" height="2.4" fill="#333" opacity="0.8"/><path d="M912,521 L912,529.5 L938,529.5" fill="none" stroke="#1c1c1c" stroke-width="1.04" stroke-linejoin="miter"/><path d="M927,520.4 L927,529.5" fill="none" stroke="#1c1c1c" stroke-width="0.88" stroke-linejoin="miter"/><path d="M918,525.2 L933,525.2 L933,520" fill="none" stroke="#1c1c1c" stroke-width="0.88" stroke-linejoin="miter"/><path d="M912,522 L915,522 L915,529" fill="none" stroke="#1c1c1c" stroke-width="0.8" stroke-linejoin="miter"/><path d="M1008.3,440 L1152.3,440 L1152.3,499" fill="none" stroke="#333" stroke-width="1.12" stroke-linejoin="miter"/><path d="M1111.7,438.08 L1107.22,440 L1111.7,441.92 Z" fill="#1c1c1c"/><path d="M940,444.4 L1070.9,444.4 L1070.9,417" fill="none" stroke="#1c1c1c" stroke-width="0.88" stroke-dasharray="4,2.2"/><path d="M1031.6,417.5 V423 l-2,1.5 l4,2 l-4,2 l4,2 l-4,2 l2,1.5 V435" fill="none" stroke="#1c1c1c" stroke-width="0.9"/><path d="M1062.9,417.5 V423 l-2,1.5 l4,2 l-4,2 l4,2 l-4,2 l2,1.5 V435" fill="none" stroke="#1c1c1c" stroke-width="0.9"/><path d="M1022,429 L1030,426" fill="none" stroke="#1c1c1c" stroke-width="0.56" stroke-linejoin="miter"/><path d="M1051,428 L1061,425" fill="none" stroke="#1c1c1c" stroke-width="0.56" stroke-linejoin="miter"/><path d="M1031.6,435 L1031.6,453.3 L1086.1,453.3 L1086.1,497" fill="none" stroke="#1c1c1c" stroke-width="0.88" stroke-linejoin="miter"/><path d="M1062.9,435 L1062.9,448 L1096,448 L1096,497" fill="none" stroke="#1c1c1c" stroke-width="0.88" stroke-linejoin="miter"/><path d="M1105.8,497 L1105.8,448.8 L1172.7,448.8 L1172.7,458" fill="none" stroke="#1c1c1c" stroke-width="0.88" stroke-linejoin="miter"/><path d="M1118.3,502.5 L1118.3,454.4 L1142.7,454.4 L1142.7,458" fill="none" stroke="#1c1c1c" stroke-width="0.88" stroke-linejoin="miter"/><path d="M1110.3,502.5 L1118.3,502.5" fill="none" stroke="#1c1c1c" stroke-width="0.88" stroke-linejoin="miter"/><path d="M1038,455.3 L1040,451.3 M1040,455.3 L1042,451.3" fill="none" stroke="#1c1c1c" stroke-width="0.8"/><path d="M1053,455.3 L1055,451.3 M1055,455.3 L1057,451.3" fill="none" stroke="#1c1c1c" stroke-width="0.8"/><path d="M1070,455.3 L1072,451.3 M1072,455.3 L1074,451.3" fill="none" stroke="#1c1c1c" stroke-width="0.8"/><path d="M1068,450 L1070,446 M1070,450 L1072,446" fill="none" stroke="#1c1c1c" stroke-width="0.8"/><path d="M1126,450.8 L1128,446.8 M1128,450.8 L1130,446.8" fill="none" stroke="#1c1c1c" stroke-width="0.8"/><path d="M1148,450.8 L1150,446.8 M1150,450.8 L1152,446.8" fill="none" stroke="#1c1c1c" stroke-width="0.8"/><path d="M1163,450.8 L1165,446.8 M1165,450.8 L1167,446.8" fill="none" stroke="#1c1c1c" stroke-width="0.8"/><path d="M1131,456.4 L1133,452.4 M1133,456.4 L1135,452.4" fill="none" stroke="#1c1c1c" stroke-width="0.8"/><path d="M1084.1,461 L1088.1,463 M1084.1,463 L1088.1,465" fill="none" stroke="#1c1c1c" stroke-width="0.8"/><path d="M1084.1,477 L1088.1,479 M1084.1,479 L1088.1,481" fill="none" stroke="#1c1c1c" stroke-width="0.8"/><path d="M1094,457 L1098,459 M1094,459 L1098,461" fill="none" stroke="#1c1c1c" stroke-width="0.8"/><path d="M1094,476 L1098,478 M1094,478 L1098,480" fill="none" stroke="#1c1c1c" stroke-width="0.8"/><path d="M1103.8,457 L1107.8,459 M1103.8,459 L1107.8,461" fill="none" stroke="#1c1c1c" stroke-width="0.8"/><path d="M1103.8,476 L1107.8,478 M1103.8,478 L1107.8,480" fill="none" stroke="#1c1c1c" stroke-width="0.8"/><path d="M1116.3,459 L1120.3,461 M1116.3,461 L1120.3,463" fill="none" stroke="#1c1c1c" stroke-width="0.8"/><path d="M1116.3,479 L1120.3,481 M1116.3,481 L1120.3,483" fill="none" stroke="#1c1c1c" stroke-width="0.8"/><path d="M1084.1799999999998,467.8 L1086.1,472.28 L1088.02,467.8 Z" fill="#1c1c1c"/><path d="M1094.08,467.8 L1096,472.28 L1097.92,467.8 Z" fill="#1c1c1c"/><path d="M1103.8799999999999,467.8 L1105.8,472.28 L1107.72,467.8 Z" fill="#1c1c1c"/><path d="M1116.3799999999999,462.8 L1118.3,467.28 L1120.22,462.8 Z" fill="#1c1c1c"/><rect x="1140.7" y="458" width="4" height="5" fill="#ddd" stroke="#1c1c1c" stroke-width="0.8"/><path d="M1142.7,463 L1142.7,471.2 L1152.1000000000001,471.2" fill="none" stroke="#1c1c1c" stroke-width="0.88" stroke-linejoin="miter"/><rect x="1170.7" y="458" width="4" height="5" fill="#ddd" stroke="#1c1c1c" stroke-width="0.8"/><path d="M1172.7,463 L1172.7,471.2 L1181.3,471.2" fill="none" stroke="#1c1c1c" stroke-width="0.88" stroke-linejoin="miter"/><circle cx="1152.3" cy="471.2" r="1.2" fill="#1c1c1c"/><circle cx="1181.3" cy="471.2" r="1.2" fill="#1c1c1c"/><path d="M1133,469 L1141,462" fill="none" stroke="#1c1c1c" stroke-width="0.56" stroke-linejoin="miter"/><path d="M1164,470 L1171,463" fill="none" stroke="#1c1c1c" stroke-width="0.56" stroke-linejoin="miter"/><path d="M1012,464 C1018,462 1026,462 1028,465 C1029,470 1027,476 1022,478 C1017,479 1011,477 1009,472" fill="#fff" stroke="#1c1c1c" stroke-width="2.2"/><path d="M1007,457 L1013.5,463 L1011,465.5 Z" fill="#1c1c1c"/><path d="M1001,471.5 L1011,464.5 L1013,469 Z" fill="#1c1c1c"/><path d="M1011,467 C1016,465 1023,466 1026,468" fill="none" stroke="#1c1c1c" stroke-width="1.2"/><path d="M1012,471 C1017,469 1022,470 1025,474" fill="none" stroke="#1c1c1c" stroke-width="1.1"/><path d="M1028,469 L1044,471.5" fill="none" stroke="#1c1c1c" stroke-width="0.56" stroke-linejoin="miter"/><rect x="1030.7" y="498.4" width="29.5" height="8.2" fill="#fff" stroke="#1c1c1c" stroke-width="1.1" rx="2.5"/><path d="M1041,500 h8 l-4,5 z" fill="none" stroke="#1c1c1c" stroke-width="0.7"/><path d="M1021,498 L1031,500" fill="none" stroke="#1c1c1c" stroke-width="0.56" stroke-linejoin="miter"/><path d="M1060.2,502.5 L1080.2,502.5" fill="none" stroke="#1c1c1c" stroke-width="0.88" stroke-linejoin="miter"/><path d="M1068.5,501.0 L1065.0,502.5 L1068.5,504.0 Z" fill="#1c1c1c"/><path d="M1072,504.5 L1074,500.5 M1074,504.5 L1076,500.5" fill="none" stroke="#1c1c1c" stroke-width="0.8"/><rect x="1080.2" y="497.1" width="30.1" height="11.3" fill="#e6e6e6" stroke="#1c1c1c" stroke-width="1.2"/><rect x="1136.3" y="493.6" width="109.5" height="29.5" fill="#ececec" stroke="#aaa" stroke-width="0.8" stroke-dasharray="3,1"/><circle cx="1152.1" cy="507.7" r="8.9" fill="#fff" stroke="#1c1c1c" stroke-width="1.1"/><path d="M1149.6,502.8 L1152.1,498.8 L1154.6,502.8 Z" fill="#1c1c1c"/><path d="M1143.1,517 L1161.1,498" fill="none" stroke="#1c1c1c" stroke-width="0.72" stroke-linejoin="miter"/><path d="M1152.1,516.6 L1152.1,526.2" fill="none" stroke="#888" stroke-width="1"/><circle cx="1181.3" cy="507.7" r="8.9" fill="#fff" stroke="#1c1c1c" stroke-width="1.1"/><path d="M1178.8,502.8 L1181.3,498.8 L1183.8,502.8 Z" fill="#1c1c1c"/><path d="M1172.3,517 L1190.3,498" fill="none" stroke="#1c1c1c" stroke-width="0.72" stroke-linejoin="miter"/><path d="M1181.3,516.6 L1181.3,526.2" fill="none" stroke="#888" stroke-width="1"/><circle cx="1206.6" cy="507.7" r="7.3" fill="#fff" stroke="#1c1c1c" stroke-width="1.1"/><path d="M1204.1,504.4 L1206.6,500.4 L1209.1,504.4 Z" fill="#1c1c1c"/><path d="M1206.6,515.0 L1206.6,526.2" fill="none" stroke="#888" stroke-width="1"/><path d="M1152,526.2 L1250.6,526.2 L1250.6,513.7 L1265.6,513.7 L1265.6,526" fill="none" stroke="#aaa" stroke-width="1.1"/><path d="M1259.5,518.8 L1259.5,526.2 L1303.9,526.2 L1303.9,518.8" fill="none" stroke="#aaa" stroke-width="1.1"/><text x="1145" y="491" font-size="4.5" fill="#1c1c1c">A1</text><text x="1175" y="491" font-size="4.5" fill="#1c1c1c">A2</text><text x="1200" y="491" font-size="4.5" fill="#1c1c1c">A3</text><path d="M1128,517 L1136,512" fill="none" stroke="#1c1c1c" stroke-width="0.56" stroke-linejoin="miter"/><rect x="1278" y="464.3" width="5.6" height="12.1" fill="#fff" stroke="#1c1c1c" stroke-width="1"/><line x1="1279" y1="467" x2="1282.6" y2="467" stroke="#1c1c1c" stroke-width="0.7"/><line x1="1279" y1="470" x2="1282.6" y2="470" stroke="#1c1c1c" stroke-width="0.7"/><line x1="1279" y1="473" x2="1282.6" y2="473" stroke="#1c1c1c" stroke-width="0.7"/><rect x="1275.5" y="485" width="10.7" height="12" fill="#e4e4e4" stroke="#aaa" stroke-width="0.8"/><path d="M1280.8,486 L1285,491 L1280.8,496 L1276.6,491 Z" fill="none" stroke="#1c1c1c" stroke-width="1"/><line x1="1276.6" y1="491" x2="1285" y2="491" stroke="#1c1c1c" stroke-width="0.8"/><rect x="1294.3" y="485" width="5.7" height="12" fill="#e4e4e4" stroke="#aaa" stroke-width="0.8"/><path d="M1297,487 v8 M1295.5,490 l1.5,-2 l1.5,2" fill="none" stroke="#1c1c1c" stroke-width="0.8"/><path d="M1280.5,476.4 L1280.5,485" fill="none" stroke="#1c1c1c" stroke-width="0.9"/><path d="M1280.5,497 L1280.5,507.7 L1296.5,507.7" fill="none" stroke="#999" stroke-width="1.1"/><path d="M1272,455 L1278,464" fill="none" stroke="#1c1c1c" stroke-width="0.56" stroke-linejoin="miter"/><path d="M1272,476 L1276,485" fill="none" stroke="#1c1c1c" stroke-width="0.56" stroke-linejoin="miter"/><path d="M1304,475 L1298,485" fill="none" stroke="#1c1c1c" stroke-width="0.56" stroke-linejoin="miter"/><rect x="1294" y="537" width="22" height="2" fill="#555" opacity="0.35"/><rect x="882.4" y="660.3" width="165" height="43" fill="#ececec"/><rect x="1047.4" y="650.4" width="133.2" height="53" fill="#ececec"/><path d="M1033.5,588.6 L1033.5,703" fill="none" stroke="#9c9c9c" stroke-width="2.3" stroke-dasharray="9,2,2,2"/><path d="M1043.3,588.6 L1043.3,703" fill="none" stroke="#9c9c9c" stroke-width="2.3" stroke-dasharray="9,2,2,2"/><path d="M1033.5,680.5 L1033.5,703" fill="none" stroke="#1c1c1c" stroke-width="0.8" stroke-linejoin="miter"/><path d="M882.4,683.8 L882.4,660.3 L909.7,660.3" fill="none" stroke="#1c1c1c" stroke-width="1.04" stroke-linejoin="miter"/><path d="M882.4,683.8 L882.4,701" fill="none" stroke="#1c1c1c" stroke-width="1.04" stroke-dasharray="5,3"/><path d="M909.7,660.3 L934.5,660.3" fill="none" stroke="#1c1c1c" stroke-width="1.04" stroke-dasharray="5,3"/><path d="M936.5,660.3 L975.5,660.3" fill="none" stroke="#1c1c1c" stroke-width="1.04" stroke-linejoin="miter"/><path d="M912,660 L921,637" fill="none" stroke="#1c1c1c" stroke-width="0.64" stroke-linejoin="miter"/><path d="M936.5,660.3 L936.5,666" fill="none" stroke="#1c1c1c" stroke-width="0.96" stroke-linejoin="miter"/><path d="M936.5,672 L936.5,703" fill="none" stroke="#1c1c1c" stroke-width="0.96" stroke-linejoin="miter"/><path d="M925.4,668.5 L1022,668.5" fill="none" stroke="#1c1c1c" stroke-width="0.96" stroke-dasharray="4.5,2.5"/><path d="M925.4,668.5 L925.4,698.2 L965,698.2" fill="none" stroke="#1c1c1c" stroke-width="0.96" stroke-dasharray="4,2.5"/><path d="M932.4,668.5 L932.4,686 L917,686" fill="none" stroke="#1c1c1c" stroke-width="0.88" stroke-dasharray="4,2.5"/><rect x="911.3" y="686.3" width="19" height="5.4" fill="#5a5a5a" opacity="0.75"/><path d="M908.4,689 L908.4,703" fill="none" stroke="#1c1c1c" stroke-width="0.88" stroke-linejoin="miter"/><path d="M923.7,691 L923.7,703" fill="none" stroke="#999" stroke-width="0.8"/><path d="M936.5,680.5 L1050,680.5" fill="none" stroke="#1c1c1c" stroke-width="0.88" stroke-linejoin="miter"/><path d="M936.5,686.3 L958.4,686.3 L958.4,680.5" fill="none" stroke="#1c1c1c" stroke-width="0.8" stroke-linejoin="miter"/><path d="M953.9,670 L953.9,676" fill="none" stroke="#1c1c1c" stroke-width="0.8" stroke-linejoin="miter"/><circle cx="953.9" cy="672.5" r="1.6" fill="#fff" stroke="#1c1c1c" stroke-width="0.9"/><circle cx="953.9" cy="679" r="2.2" fill="#fff" stroke="#1c1c1c" stroke-width="1"/><path d="M882.4,701.6 L1010,701.6" fill="none" stroke="#1c1c1c" stroke-width="1.04" stroke-linejoin="miter"/><rect x="957" y="697" width="6" height="5" fill="#fff" stroke="#1c1c1c" stroke-width="0.9"/><rect x="960" y="684.5" width="23" height="2.2" fill="#222" opacity="0.7"/><rect x="988" y="699" width="27" height="2.2" fill="#222" opacity="0.7"/><text x="876" y="701" font-size="4.5" fill="#000" textLength="5" lengthAdjust="spacingAndGlyphs">A5</text><path d="M960,660.3 L975.5,660.3" fill="none" stroke="#1c1c1c" stroke-width="0.96" stroke-dasharray="4.5,2.5"/><path d="M979,664.8 L979,660.3 L986.4,660.3" fill="none" stroke="#1c1c1c" stroke-width="0.88" stroke-linejoin="miter"/><path d="M988.5,660.3 L988.5,680.5" fill="none" stroke="#1c1c1c" stroke-width="1.04" stroke-linejoin="miter"/><path d="M990.5,660.3 L1020.3,660.3" fill="none" stroke="#aaa" stroke-width="1"/><path d="M1021.1,660.3 L1021.1,669" fill="none" stroke="#1c1c1c" stroke-width="0.96" stroke-dasharray="3,2"/><path d="M1021.1,672 L1021.1,700" fill="none" stroke="#999" stroke-width="0.96" stroke-dasharray="4,2.5"/><path d="M979,668.5 L979,673.5" fill="none" stroke="#1c1c1c" stroke-width="0.88" stroke-linejoin="miter"/><path d="M980,673.1 L1050,673.1" fill="none" stroke="#999" stroke-width="0.88" stroke-dasharray="4,2.5"/><path d="M997.6,662 V680.5" fill="none" stroke="#999" stroke-width="1.8"/><path d="M1006.7,662 L1006.7,680.5" fill="none" stroke="#1c1c1c" stroke-width="0.88" stroke-linejoin="miter"/><path d="M986.5,675 l2,-2.5 l2,2.5" fill="none" stroke="#1c1c1c" stroke-width="0.7"/><path d="M995.6,675 l2,-2.5 l2,2.5" fill="none" stroke="#1c1c1c" stroke-width="0.7"/><path d="M1004.7,675 l2,-2.5 l2,2.5" fill="none" stroke="#1c1c1c" stroke-width="0.7"/><path d="M1019.1,675 l2,-2.5 l2,2.5" fill="none" stroke="#1c1c1c" stroke-width="0.7"/><text x="972" y="657.5" font-size="4" fill="#444" textLength="5" lengthAdjust="spacingAndGlyphs">T8</text><text x="982" y="657.5" font-size="4" fill="#444" textLength="5" lengthAdjust="spacingAndGlyphs">T3</text><text x="991" y="657.5" font-size="4" fill="#444" textLength="5" lengthAdjust="spacingAndGlyphs">T1</text><text x="1000" y="657.5" font-size="4" fill="#444" textLength="6" lengthAdjust="spacingAndGlyphs">T7</text><text x="1012" y="657.5" font-size="4" fill="#444" textLength="8" lengthAdjust="spacingAndGlyphs">DR1</text><text x="1025" y="658" font-size="8" fill="#000" textLength="7.5" lengthAdjust="spacingAndGlyphs">T1</text><text x="1035" y="658" font-size="8" fill="#888" textLength="7.5" lengthAdjust="spacingAndGlyphs">T2</text><text x="925" y="658" font-size="4" fill="#333" textLength="8" lengthAdjust="spacingAndGlyphs">pa1</text><text x="943" y="658" font-size="4" fill="#333" textLength="8" lengthAdjust="spacingAndGlyphs">Pa1</text><path d="M1047.4,680 L1047.4,650.4 L1074.7,650.4" fill="none" stroke="#aaa" stroke-width="1.2"/><path d="M1078,650.4 L1180.6,650.4 L1180.6,675.6" fill="none" stroke="#1c1c1c" stroke-width="0.96" stroke-dasharray="4.5,3"/><path d="M1045,660.3 L1073,660.3" fill="none" stroke="#999" stroke-width="1"/><path d="M1077,660.3 L1180.6,660.3" fill="none" stroke="#1c1c1c" stroke-width="0.96" stroke-dasharray="4.5,3"/><path d="M1052.4,660.3 L1052.4,681" fill="none" stroke="#1c1c1c" stroke-width="0.88" stroke-linejoin="miter"/><path d="M1057.3,660.3 V700" fill="none" stroke="#999" stroke-width="1.8"/><path d="M1050.5,657 l2,3 l2,-3 M1055.5,657 l2,3 l2,-3" fill="none" stroke="#1c1c1c" stroke-width="0.7"/><path d="M1116.6,696.2 L1116.6,655.3 L1135.6,655.3 L1135.6,699.1" fill="none" stroke="#1c1c1c" stroke-width="0.96" stroke-linejoin="miter"/><path d="M1071.4,670 L1071.4,666.6 L1180.6,666.6" fill="none" stroke="#1c1c1c" stroke-width="0.96" stroke-dasharray="4.5,3"/><path d="M1071.4,670 L1071.4,676" fill="none" stroke="#1c1c1c" stroke-width="0.88" stroke-linejoin="miter"/><circle cx="1071.4" cy="672" r="1.5" fill="#fff" stroke="#1c1c1c" stroke-width="0.9"/><circle cx="1071.4" cy="679.5" r="2.2" fill="#fff" stroke="#1c1c1c" stroke-width="1"/><path d="M1040,673.1 L1062,673.1" fill="none" stroke="#999" stroke-width="0.8" stroke-dasharray="4,2.2"/><path d="M1061.9,673.1 L1061.9,680.5" fill="none" stroke="#1c1c1c" stroke-width="0.8" stroke-linejoin="miter"/><path d="M1050,680.5 L1093.7,680.5" fill="none" stroke="#1c1c1c" stroke-width="0.88" stroke-linejoin="miter"/><path d="M1093.7,680.5 L1180.6,680.5 L1180.6,686.3" fill="none" stroke="#1c1c1c" stroke-width="0.96" stroke-dasharray="4.5,3"/><path d="M1116.6,675.6 L1180.6,675.6" fill="none" stroke="#1c1c1c" stroke-width="0.88" stroke-linejoin="miter"/><path d="M1088.7,680.5 L1088.7,696.6 L1116.6,696.6" fill="none" stroke="#1c1c1c" stroke-width="0.88" stroke-linejoin="miter"/><path d="M1066.4,680.5 L1066.4,686.3 L1088.7,686.3" fill="none" stroke="#1c1c1c" stroke-width="0.8" stroke-linejoin="miter"/><path d="M1040,691.2 L1090,691.2" fill="none" stroke="#1c1c1c" stroke-width="0.96" stroke-dasharray="4.5,3"/><path d="M1090,691.2 L1109,691.2" fill="none" stroke="#aaa" stroke-width="0.96" stroke-dasharray="4.5,3"/><rect x="1109" y="687.5" width="19.8" height="6.5" fill="#222" rx="1.5"/><rect x="1113" y="689" width="2.2" height="3.5" fill="#eee"/><rect x="1118" y="689" width="2.2" height="3.5" fill="#eee"/><rect x="1122" y="689" width="2.2" height="3.5" fill="#eee"/><path d="M1128.8,691.2 L1180.6,691.2 L1180.6,697.8" fill="none" stroke="#1c1c1c" stroke-width="0.96" stroke-dasharray="4.5,3"/><path d="M1043,699.5 L1114,699.5" fill="none" stroke="#1c1c1c" stroke-width="0.96" stroke-linejoin="miter"/><path d="M1110,699.1 L1135.6,699.1" fill="none" stroke="#1c1c1c" stroke-width="0.88" stroke-linejoin="miter"/><path d="M1066,699.5 l2.5,-2.5 l2.5,2.5 l-2.5,2.5 z" fill="#fff" stroke="#1c1c1c" stroke-width="0.8"/><path d="M1166,703 L1166,698.7 L1180,698.7" fill="none" stroke="#1c1c1c" stroke-width="0.88" stroke-linejoin="miter"/><text x="1183" y="664" font-size="4.5" fill="#000" textLength="8" lengthAdjust="spacingAndGlyphs">Pa2</text><text x="1183" y="674" font-size="4.5" fill="#000" textLength="5.5" lengthAdjust="spacingAndGlyphs">P5</text><text x="1183" y="679" font-size="4.5" fill="#000" textLength="7.5" lengthAdjust="spacingAndGlyphs">pa2</text><text x="1183" y="690" font-size="4.5" fill="#000" textLength="8" lengthAdjust="spacingAndGlyphs">pcc</text><text x="1183" y="697" font-size="4.5" fill="#000" textLength="10" lengthAdjust="spacingAndGlyphs">pra1</text><text x="1183" y="702" font-size="4.5" fill="#000" textLength="10" lengthAdjust="spacingAndGlyphs">pra2</text><text x="772" y="333" font-size="7.68" fill="#1a1a1a" textLength="3" lengthAdjust="spacingAndGlyphs">1</text><text x="839.7" y="335.1" font-size="5.73" fill="#1a1a1a" textLength="3.5" lengthAdjust="spacingAndGlyphs">2</text><text x="856.5" y="337.2" font-size="5.87" fill="#1a1a1a" textLength="4.2" lengthAdjust="spacingAndGlyphs">3</text><text x="1000" y="244" font-size="4.89" fill="#1a1a1a" textLength="4.6" lengthAdjust="spacingAndGlyphs">9</text><text x="1156.2" y="300.5" font-size="6.01" fill="#1a1a1a" textLength="9.8" lengthAdjust="spacingAndGlyphs">1 0</text><text x="1169" y="326.7" font-size="6.01" fill="#1a1a1a" textLength="7.4" lengthAdjust="spacingAndGlyphs">1 1</text><text x="1224.7" y="218.8" font-size="5.45" fill="#1a1a1a" textLength="8.9" lengthAdjust="spacingAndGlyphs">1 2</text><text x="955" y="346.9" font-size="7.68" fill="#1a1a1a" textLength="5.6" lengthAdjust="spacingAndGlyphs">4</text><text x="969" y="331" font-size="6.98" fill="#1a1a1a" textLength="8" lengthAdjust="spacingAndGlyphs">21</text><text x="1009.2" y="430" font-size="6.15" fill="#1a1a1a" textLength="9.8" lengthAdjust="spacingAndGlyphs">1 3</text><text x="1040.5" y="429.2" font-size="6.28" fill="#1a1a1a" textLength="9.8" lengthAdjust="spacingAndGlyphs">1 4</text><text x="1044" y="473.9" font-size="5.73" fill="#1a1a1a" textLength="10" lengthAdjust="spacingAndGlyphs">1 5</text><text x="1010.4" y="499.3" font-size="6.28" fill="#1a1a1a" textLength="9.6" lengthAdjust="spacingAndGlyphs">1 6</text><text x="1091.5" y="504.3" font-size="6.28" fill="#1a1a1a" textLength="8.9" lengthAdjust="spacingAndGlyphs">1 7</text><text x="979.7" y="529" font-size="5.73" fill="#1a1a1a" textLength="5.8" lengthAdjust="spacingAndGlyphs">9</text><text x="1123.8" y="473.3" font-size="6.01" fill="#1a1a1a" textLength="10.2" lengthAdjust="spacingAndGlyphs">1 9</text><text x="1156.4" y="475" font-size="6.01" fill="#1a1a1a" textLength="10.3" lengthAdjust="spacingAndGlyphs">1 9</text><text x="1117.7" y="522.3" font-size="6.01" fill="#1a1a1a" textLength="11.3" lengthAdjust="spacingAndGlyphs">2 0</text><text x="1265.5" y="453.5" font-size="6.01" fill="#1a1a1a" textLength="9.5" lengthAdjust="spacingAndGlyphs">2 1</text><text x="1265.5" y="474.1" font-size="6.01" fill="#1a1a1a" textLength="9.5" lengthAdjust="spacingAndGlyphs">2 2</text><text x="1300" y="473.3" font-size="6.01" fill="#1a1a1a" textLength="9.4" lengthAdjust="spacingAndGlyphs">2 1</text><text x="864" y="456" font-size="6.28" fill="#1a1a1a" textLength="5" lengthAdjust="spacingAndGlyphs">5</text><text x="846.4" y="468" font-size="6.01" fill="#1a1a1a" textLength="2.0" lengthAdjust="spacingAndGlyphs">1</text><text x="814.4" y="526.6" font-size="6.42" fill="#1a1a1a" textLength="5.1" lengthAdjust="spacingAndGlyphs">3</text><text x="846" y="528.3" font-size="6.42" fill="#1a1a1a" textLength="4.5" lengthAdjust="spacingAndGlyphs">2</text><text x="888.7" y="497.3" font-size="5.73" fill="#1a1a1a" textLength="5.1" lengthAdjust="spacingAndGlyphs">7</text><text x="971.2" y="461.2" font-size="5.87" fill="#1a1a1a" textLength="5.6" lengthAdjust="spacingAndGlyphs">6</text><text x="921.5" y="633.5" font-size="6.28" fill="#1a1a1a" textLength="8.0" lengthAdjust="spacingAndGlyphs">9</text></svg></body></html>
